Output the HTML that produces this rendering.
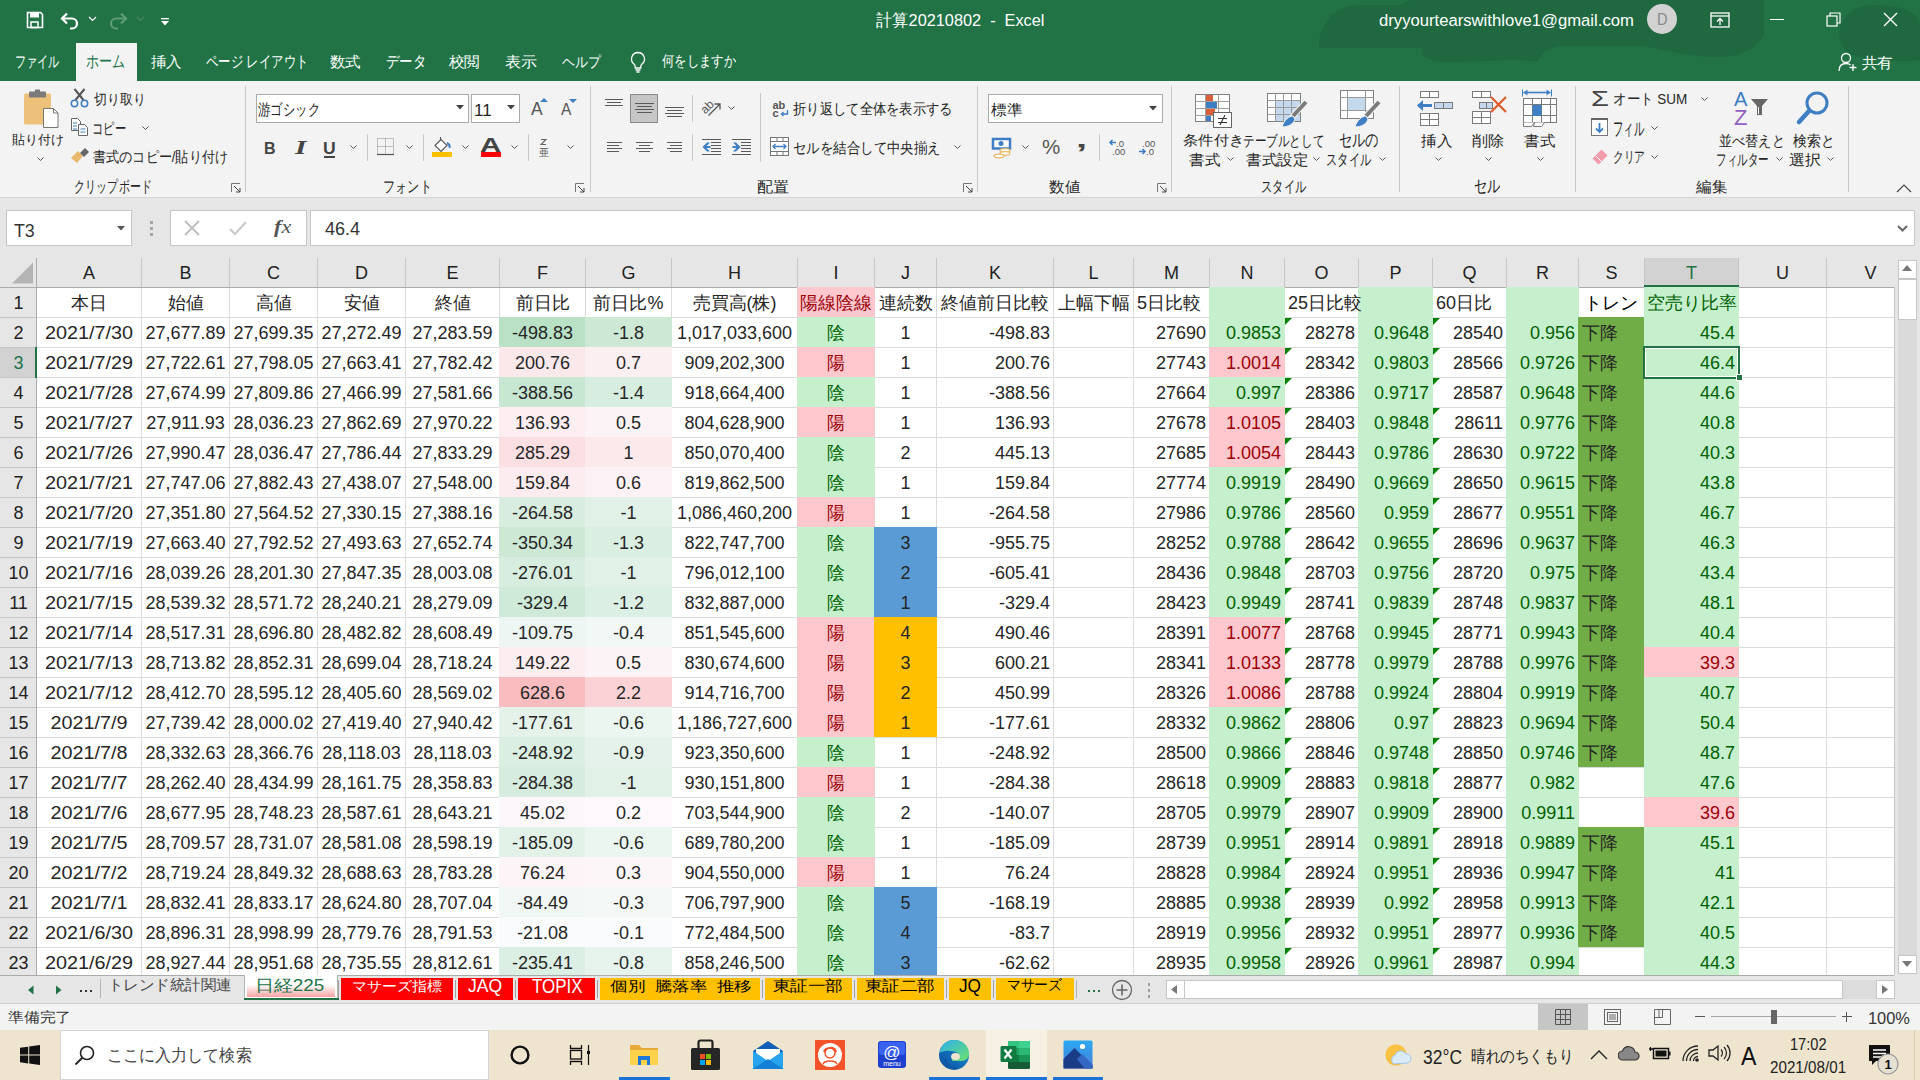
<!DOCTYPE html><html><head><meta charset="utf-8"><style>
html,body{margin:0;padding:0}
body{width:1920px;height:1080px;overflow:hidden;position:relative;font-family:'Liberation Sans', sans-serif;background:#f3f3f3}
.a{position:absolute}
.t{line-height:1;white-space:nowrap;transform-origin:0 0}
</style></head><body>
<div class="a" style="left:0px;top:0px;width:1920px;height:81px;background:#217346;"></div>
<svg class="a" style="left:0;top:0" width="1920" height="81" viewBox="0 0 1920 81">
<g fill="#1f6840">
<path d="M1319,48 C1319,22 1335,5 1362,5 L1400,5 C1405,2 1410,0 1415,0 L1764,0 L1764,35 C1755,50 1740,57 1715,57 C1690,57 1660,48 1640,46 L1560,46 C1545,48 1540,55 1538,62 C1520,58 1480,62 1440,62 C1425,60 1420,55 1422,48 Z"/>
<path d="M1845,50 C1830,30 1845,5 1875,5 C1905,5 1920,15 1920,25 L1920,60 C1900,62 1860,62 1845,50 Z"/>
</g></svg>
<svg class="a" style="left:26px;top:11px;" width="18" height="18" viewBox="0 0 18 18"><path d="M1.5 1.5h13l2 2v13h-15z" fill="none" stroke="#fff" stroke-width="1.6"/><rect x="4" y="1.5" width="9" height="5" fill="#fff"/><rect x="5" y="11" width="7" height="5.5" fill="none" stroke="#fff" stroke-width="1.5"/></svg>
<svg class="a" style="left:60px;top:12px;" width="20" height="18" viewBox="0 0 20 18"><path d="M3 6.5h9a5 5 0 0 1 0 10h-2" fill="none" stroke="#fff" stroke-width="2.2"/><path d="M7 1.5L2 6.5l5 5" fill="none" stroke="#fff" stroke-width="2.2"/></svg>
<svg class="a" style="left:88px;top:16px;" width="9" height="6" viewBox="0 0 9 6"><path d="M1 1l3.5 3.5L8 1" fill="none" stroke="#fff" stroke-width="1.2"/></svg>
<svg class="a" style="left:108px;top:12px;" width="20" height="18" viewBox="0 0 20 18"><path d="M17 6.5H8a5 5 0 0 0 0 10h2" fill="none" stroke="#5e9c78" stroke-width="2.2"/><path d="M13 1.5l5 5-5 5" fill="none" stroke="#5e9c78" stroke-width="2.2"/></svg>
<svg class="a" style="left:136px;top:16px;" width="9" height="6" viewBox="0 0 9 6"><path d="M1 1l3.5 3.5L8 1" fill="none" stroke="#4a8a65" stroke-width="1.2"/></svg>
<svg class="a" style="left:160px;top:18px;" width="10" height="9" viewBox="0 0 10 9"><rect x="1" y="0" width="8" height="1.3" fill="#fff"/><path d="M1 3h8l-4 4.5z" fill="#fff"/></svg>
<div class="a t" style="left:876.00px;top:12.00px;font-size:16px;color:#fff;transform:scale(1.0183,1.0667);">計算20210802&nbsp; - &nbsp;Excel</div>
<div class="a t" style="left:1378.96px;top:11.93px;font-size:16px;color:#fff;transform:scale(1.0412,1.0667);">dryyourtearswithlove1@gmail.com</div>
<div class="a" style="left:1647px;top:4px;width:30px;height:30px;border-radius:50%;background:#d2d2d2"></div>
<div class="a t" style="left:1656.88px;top:11.56px;font-size:13px;color:#8a8a8a;transform:scale(1.1250,1.2222);">D</div>
<svg class="a" style="left:1710px;top:12px;" width="20" height="16" viewBox="0 0 20 16"><rect x="1" y="1" width="18" height="14" fill="none" stroke="#fff" stroke-width="1.3"/><path d="M1 4h18" stroke="#fff" stroke-width="1.3"/><path d="M10 13V6.5M7 9.5l3-3 3 3" fill="none" stroke="#fff" stroke-width="1.3"/></svg>
<div class="a" style="left:1770px;top:19px;width:14px;height:1.3px;background:#fff;"></div>
<svg class="a" style="left:1826px;top:12px;" width="16" height="16" viewBox="0 0 16 16"><rect x="1" y="4" width="10" height="10" fill="none" stroke="#fff" stroke-width="1.2"/><path d="M4 4V1h10v10h-3" fill="none" stroke="#fff" stroke-width="1.2"/></svg>
<svg class="a" style="left:1883px;top:12px;" width="15" height="15" viewBox="0 0 15 15"><path d="M1 1l13 13M14 1L1 14" stroke="#fff" stroke-width="1.4"/></svg>
<div class="a" style="left:76px;top:43px;width:61px;height:38px;background:#f3f3f3;"></div>
<div class="a t" style="left:14.61px;top:54.00px;font-size:16px;color:#fff;transform:scale(0.6935,1.0000);">ファイル</div>
<div class="a t" style="left:86.17px;top:52.85px;font-size:16px;color:#217346;transform:scale(0.8261,1.0769);">ホーム</div>
<div class="a t" style="left:151.00px;top:55.00px;font-size:16px;color:#fff;transform:scale(0.9677,0.9333);">挿入</div>
<div class="a t" style="left:206.23px;top:54.00px;font-size:16px;color:#fff;transform:scale(0.7717,1.0000);">ページ レイアウト</div>
<div class="a t" style="left:330.03px;top:55.00px;font-size:16px;color:#fff;transform:scale(0.9677,0.9333);">数式</div>
<div class="a t" style="left:386.16px;top:54.00px;font-size:16px;color:#fff;transform:scale(0.8409,1.0000);">データ</div>
<div class="a t" style="left:449.00px;top:55.00px;font-size:16px;color:#fff;transform:scale(0.9677,0.9333);">校閲</div>
<div class="a t" style="left:505.00px;top:55.00px;font-size:16px;color:#fff;transform:scale(1.0000,0.9333);">表示</div>
<div class="a t" style="left:562.20px;top:55.00px;font-size:16px;color:#fff;transform:scale(0.8043,0.9333);">ヘルプ</div>
<div class="a t" style="left:662.00px;top:54.07px;font-size:16px;color:#fff;transform:scale(0.7708,0.9333);">何をしますか</div>
<svg class="a" style="left:629px;top:51px;" width="18" height="22" viewBox="0 0 18 22"><path d="M9 1.5a6.5 6.5 0 0 0-4 11.6c.8.7 1.2 1.6 1.2 2.6v1.3h5.6v-1.3c0-1 .4-1.9 1.2-2.6A6.5 6.5 0 0 0 9 1.5z" fill="none" stroke="#fff" stroke-width="1.3"/><path d="M6.5 19h5M7.5 21h3" stroke="#fff" stroke-width="1.3"/></svg>
<svg class="a" style="left:1838px;top:52px;" width="20" height="20" viewBox="0 0 20 20"><circle cx="8" cy="6" r="4.5" fill="none" stroke="#fff" stroke-width="1.3"/><path d="M1 19c0-5 3-7.5 7-7.5 2 0 3.5.5 4.5 1.5" fill="none" stroke="#fff" stroke-width="1.3"/><path d="M15 12v7M11.5 15.5h7" stroke="#fff" stroke-width="1.3"/></svg>
<div class="a t" style="left:1862.00px;top:56.00px;font-size:16px;color:#fff;transform:scale(0.9677,0.9333);">共有</div>
<div class="a" style="left:0px;top:81px;width:1920px;height:116px;background:#f3f3f3;"></div>
<div class="a" style="left:0px;top:197px;width:1920px;height:1px;background:#d6d6d6;"></div>
<svg class="a" style="left:23px;top:89px;" width="38" height="40" viewBox="0 0 38 40"><rect x="1" y="4.5" width="27" height="31" rx="1.5" fill="#eec17a"/><rect x="6" y="2.5" width="17" height="6" rx="1" fill="#7a7a7a"/><rect x="12" y="0.5" width="5" height="4" fill="#7a7a7a"/><path d="M20.5 19.5h10l4.5 4.5v14.5h-14.5z" fill="#fff" stroke="#777" stroke-width="1"/><path d="M30.5 19.5v4.5h4.5" fill="none" stroke="#777" stroke-width="1"/></svg>
<div class="a t" style="left:12.00px;top:133.13px;font-size:15px;color:#262626;transform:scale(0.8644,0.8667);">貼り付け</div>
<svg class="a" style="left:36px;top:156px;" width="9" height="6" viewBox="0 0 9 6"><path d="M1.5 1.5l3 3 3-3" fill="none" stroke="#555" stroke-width="1"/></svg>
<svg class="a" style="left:70px;top:88px;" width="19" height="20" viewBox="0 0 19 20"><path d="M4.5 1l9 11M14.5 1l-9 11" stroke="#555" stroke-width="2"/><circle cx="4.5" cy="15.5" r="3.2" fill="none" stroke="#3e7ec4" stroke-width="1.5"/><circle cx="14.5" cy="15.5" r="3.2" fill="none" stroke="#3e7ec4" stroke-width="1.5"/></svg>
<div class="a t" style="left:94.00px;top:92.07px;font-size:15px;color:#262626;transform:scale(0.8571,0.9286);">切り取り</div>
<svg class="a" style="left:70px;top:117px;" width="20" height="20" viewBox="0 0 20 20"><path d="M1.5 1.5h6l3 3v9h-9z" fill="#fff" stroke="#666" stroke-width="1"/><path d="M8.5 7.5h6l3 3v8h-9z" fill="#fff" stroke="#666" stroke-width="1"/><path d="M3 6h4M3 9h4M3 12h4M10.5 12h5M10.5 15h5" stroke="#3e7ec4" stroke-width="1.2"/></svg>
<div class="a t" style="left:92.48px;top:119.92px;font-size:15px;color:#262626;transform:scale(0.7619,1.0769);">コピー</div>
<svg class="a" style="left:141px;top:125px;" width="9" height="6" viewBox="0 0 9 6"><path d="M1.5 1.5l3 3 3-3" fill="none" stroke="#555" stroke-width="1"/></svg>
<svg class="a" style="left:70px;top:147px;" width="20" height="18" viewBox="0 0 20 18"><path d="M1 11l7-7 5 5-6 7z" fill="#e8b96a"/><path d="M10 6l5-5 4 4-5 5z" fill="#666"/></svg>
<div class="a t" style="left:93.12px;top:149.00px;font-size:15px;color:#262626;transform:scale(0.8750,1.0000);">書式のコピー/貼り付け</div>
<div class="a t" style="left:73.51px;top:177.85px;font-size:15px;color:#262626;transform:scale(0.7426,1.0769);">クリップボード</div>
<svg class="a" style="left:231px;top:183px;" width="11" height="10" viewBox="0 0 11 10"><path d="M0.5 9V0.5H9" fill="none" stroke="#777" stroke-width="1"/><path d="M3 3l6 6M5 9h4V5" fill="none" stroke="#444" stroke-width="1"/></svg>
<div class="a" style="left:245px;top:86px;width:1px;height:106px;background:#c8c8c8;"></div>
<div class="a" style="left:256px;top:94px;width:211px;height:27px;background:#fff;border:1px solid #ababab"></div>
<div class="a t" style="left:258.17px;top:100.93px;font-size:15px;color:#262626;transform:scale(0.8310,1.0714);">游ゴシック</div>
<svg class="a" style="left:456px;top:105px;" width="9" height="5" viewBox="0 0 9 5"><path d="M0 0h8l-4 4.5z" fill="#444"/></svg>
<div class="a" style="left:471px;top:94px;width:47px;height:27px;background:#fff;border:1px solid #ababab"></div>
<div class="a t" style="left:473.93px;top:101.92px;font-size:16px;color:#262626;transform:scale(1.0667,1.0833);">11</div>
<svg class="a" style="left:507px;top:105px;" width="9" height="5" viewBox="0 0 9 5"><path d="M0 0h8l-4 4.5z" fill="#444"/></svg>
<div class="a t" style="left:531.00px;top:99.83px;font-size:16px;color:#555;transform:scale(1.0909,1.1667);">A</div>
<svg class="a" style="left:540px;top:98px;" width="8" height="4" viewBox="0 0 8 4"><path d="M0 4h8L4 0z" fill="#3e7ec4"/></svg>
<div class="a t" style="left:561.00px;top:100.60px;font-size:14px;color:#555;transform:scale(1.1111,1.2000);">A</div>
<svg class="a" style="left:569px;top:99px;" width="8" height="4" viewBox="0 0 8 4"><path d="M0 0h8L4 4z" fill="#3e7ec4"/></svg>
<div class="a t" style="left:264.00px;top:139.92px;font-size:16px;color:#444;transform:scale(1.0000,1.0833);font-weight:bold">B</div>
<div class="a t" style="left:295.00px;top:138.64px;font-size:16px;color:#444;transform:scale(1.8333,1.1818);font-style:italic;font-weight:bold;font-family:Liberation Serif">I</div>
<div class="a t" style="left:322.90px;top:139.92px;font-size:16px;color:#444;transform:scale(1.1000,1.0833);font-weight:bold">U</div>
<div class="a" style="left:324px;top:156px;width:11px;height:1.5px;background:#444;"></div>
<svg class="a" style="left:349px;top:144px;" width="9" height="6" viewBox="0 0 9 6"><path d="M1.5 1.5l3 3 3-3" fill="none" stroke="#555" stroke-width="1"/></svg>
<div class="a" style="left:367px;top:134px;width:1px;height:27px;background:#c8c8c8;"></div>
<svg class="a" style="left:377px;top:138px;" width="18" height="18" viewBox="0 0 18 18"><path d="M0.5 0.5h16v16H0.5zM8.5 0.5v16M0.5 8.5h16" fill="none" stroke="#888" stroke-width="1" stroke-dasharray="1 1"/><path d="M0 16.5h17" stroke="#555" stroke-width="1.2"/></svg>
<svg class="a" style="left:405px;top:144px;" width="9" height="6" viewBox="0 0 9 6"><path d="M1.5 1.5l3 3 3-3" fill="none" stroke="#555" stroke-width="1"/></svg>
<div class="a" style="left:423px;top:134px;width:1px;height:27px;background:#c8c8c8;"></div>
<svg class="a" style="left:431px;top:136px;" width="22" height="22" viewBox="0 0 22 22"><path d="M4 9.5l6-6 6 6-6 6z" fill="#fff" stroke="#555" stroke-width="1.1"/><path d="M9.5 4V1" stroke="#555" stroke-width="1.1"/><path d="M16 7c2 1 3 3 2.5 5" fill="none" stroke="#3e7ec4" stroke-width="2"/><rect x="1" y="16" width="20" height="5" fill="#ffc000"/></svg>
<svg class="a" style="left:461px;top:144px;" width="9" height="6" viewBox="0 0 9 6"><path d="M1.5 1.5l3 3 3-3" fill="none" stroke="#555" stroke-width="1"/></svg>
<div class="a t" style="left:480.27px;top:135.67px;font-size:17px;color:#444;transform:scale(1.7273,1.1667);font-weight:bold">A</div>
<div class="a" style="left:481px;top:152px;width:20px;height:5px;background:#ff0000;"></div>
<svg class="a" style="left:510px;top:144px;" width="9" height="6" viewBox="0 0 9 6"><path d="M1.5 1.5l3 3 3-3" fill="none" stroke="#555" stroke-width="1"/></svg>
<div class="a" style="left:528px;top:134px;width:1px;height:27px;background:#c8c8c8;"></div>
<svg class="a" style="left:538px;top:138px;" width="12" height="19" viewBox="0 0 12 19"><path d="M3 1.5h5l-5 5h5" fill="none" stroke="#666" stroke-width="1.1"/><text x="0.5" y="18" font-size="10" fill="#555">亜</text></svg>
<svg class="a" style="left:566px;top:144px;" width="9" height="6" viewBox="0 0 9 6"><path d="M1.5 1.5l3 3 3-3" fill="none" stroke="#555" stroke-width="1"/></svg>
<div class="a t" style="left:383.37px;top:177.85px;font-size:15px;color:#262626;transform:scale(0.8148,1.0769);">フォント</div>
<svg class="a" style="left:575px;top:183px;" width="11" height="10" viewBox="0 0 11 10"><path d="M0.5 9V0.5H9" fill="none" stroke="#777" stroke-width="1"/><path d="M3 3l6 6M5 9h4V5" fill="none" stroke="#444" stroke-width="1"/></svg>
<div class="a" style="left:590px;top:86px;width:1px;height:106px;background:#c8c8c8;"></div>
<div class="a" style="left:630px;top:94px;width:28px;height:29px;background:#c6c6c6;border:1px solid #8a8a8a;box-sizing:border-box"></div>
<div class="a" style="left:605px;top:99px;width:18px;height:1px;background:#5a5a5a;"></div>
<div class="a" style="left:607px;top:102px;width:14px;height:1px;background:#5a5a5a;"></div>
<div class="a" style="left:605px;top:105px;width:18px;height:1px;background:#5a5a5a;"></div>
<div class="a" style="left:635px;top:103px;width:19px;height:1px;background:#5a5a5a;"></div>
<div class="a" style="left:637px;top:106px;width:15px;height:1px;background:#5a5a5a;"></div>
<div class="a" style="left:635px;top:109px;width:19px;height:1px;background:#5a5a5a;"></div>
<div class="a" style="left:637px;top:112px;width:15px;height:1px;background:#5a5a5a;"></div>
<div class="a" style="left:665px;top:107px;width:19px;height:1px;background:#5a5a5a;"></div>
<div class="a" style="left:667px;top:110px;width:15px;height:1px;background:#5a5a5a;"></div>
<div class="a" style="left:665px;top:113px;width:19px;height:1px;background:#5a5a5a;"></div>
<div class="a" style="left:667px;top:116px;width:15px;height:1px;background:#5a5a5a;"></div>
<div class="a" style="left:607px;top:142px;width:15px;height:1px;background:#5a5a5a;"></div>
<div class="a" style="left:607px;top:145px;width:12px;height:1px;background:#5a5a5a;"></div>
<div class="a" style="left:607px;top:148px;width:15px;height:1px;background:#5a5a5a;"></div>
<div class="a" style="left:607px;top:151px;width:12px;height:1px;background:#5a5a5a;"></div>
<div class="a" style="left:636px;top:142px;width:17px;height:1px;background:#5a5a5a;"></div>
<div class="a" style="left:639px;top:145px;width:11px;height:1px;background:#5a5a5a;"></div>
<div class="a" style="left:636px;top:148px;width:17px;height:1px;background:#5a5a5a;"></div>
<div class="a" style="left:639px;top:151px;width:11px;height:1px;background:#5a5a5a;"></div>
<div class="a" style="left:667px;top:142px;width:15px;height:1px;background:#5a5a5a;"></div>
<div class="a" style="left:670px;top:145px;width:12px;height:1px;background:#5a5a5a;"></div>
<div class="a" style="left:667px;top:148px;width:15px;height:1px;background:#5a5a5a;"></div>
<div class="a" style="left:670px;top:151px;width:12px;height:1px;background:#5a5a5a;"></div>
<div class="a" style="left:692px;top:95px;width:1px;height:27px;background:#c8c8c8;"></div>
<div class="a" style="left:692px;top:134px;width:1px;height:27px;background:#c8c8c8;"></div>
<svg class="a" style="left:700px;top:96px;" width="24" height="24" viewBox="0 0 24 24"><g transform="rotate(-45 8 10)"><text x="0" y="14" font-size="12" fill="#555">ab</text></g><path d="M8.5 19.5L19.5 8.5M14.5 8h5.5v5.5" fill="none" stroke="#555" stroke-width="1.3"/></svg>
<svg class="a" style="left:727px;top:105px;" width="9" height="6" viewBox="0 0 9 6"><path d="M1.5 1.5l3 3 3-3" fill="none" stroke="#555" stroke-width="1"/></svg>
<div class="a" style="left:702px;top:139px;width:19px;height:1px;background:#5a5a5a;"></div>
<div class="a" style="left:702px;top:154px;width:19px;height:1px;background:#5a5a5a;"></div>
<div class="a" style="left:711px;top:142px;width:10px;height:1px;background:#5a5a5a;"></div>
<div class="a" style="left:711px;top:145px;width:10px;height:1px;background:#5a5a5a;"></div>
<div class="a" style="left:711px;top:148px;width:10px;height:1px;background:#5a5a5a;"></div>
<div class="a" style="left:711px;top:151px;width:10px;height:1px;background:#5a5a5a;"></div>
<div class="a" style="left:732px;top:139px;width:19px;height:1px;background:#5a5a5a;"></div>
<div class="a" style="left:732px;top:154px;width:19px;height:1px;background:#5a5a5a;"></div>
<div class="a" style="left:741px;top:142px;width:10px;height:1px;background:#5a5a5a;"></div>
<div class="a" style="left:741px;top:145px;width:10px;height:1px;background:#5a5a5a;"></div>
<div class="a" style="left:741px;top:148px;width:10px;height:1px;background:#5a5a5a;"></div>
<div class="a" style="left:741px;top:151px;width:10px;height:1px;background:#5a5a5a;"></div>
<svg class="a" style="left:702px;top:142px;" width="9" height="10" viewBox="0 0 9 10"><path d="M0.5 5L5 0.5h3L4.5 4h4v2h-4L8 9.5H5z" fill="#3e7ec4"/></svg>
<svg class="a" style="left:732px;top:142px;" width="9" height="10" viewBox="0 0 9 10"><path d="M8.5 5L4 0.5H1L4.5 4h-4v2h4L1 9.5h3z" fill="#3e7ec4"/></svg>
<div class="a" style="left:760px;top:93px;width:1px;height:69px;background:#c8c8c8;"></div>
<svg class="a" style="left:771px;top:99px;" width="20" height="20" viewBox="0 0 20 20"><text x="1.5" y="10" font-size="11" fill="#555" font-weight="bold">ab</text><text x="1.5" y="18" font-size="11" fill="#555" font-weight="bold">c</text><path d="M16.5 11v4h-6M12.5 13l-2 2 2 2" fill="none" stroke="#3e7ec4" stroke-width="1.3"/></svg>
<div class="a t" style="left:793.11px;top:101.00px;font-size:15px;color:#262626;transform:scale(0.8870,1.0000);">折り返して全体を表示する</div>
<svg class="a" style="left:769px;top:136px;" width="21" height="21" viewBox="0 0 21 21"><rect x="1.5" y="1.5" width="18" height="18" fill="#fff" stroke="#777"/><path d="M1.5 5.5h18M1.5 15.5h18M8 1.5v4M14 1.5v4M8 15.5v4M14 15.5v4" stroke="#777"/><path d="M4 10.5h13M6.5 8L4 10.5l2.5 2.5M14.5 8L17 10.5 14.5 13" fill="none" stroke="#3e7ec4" stroke-width="1.3"/></svg>
<div class="a t" style="left:793.10px;top:140.00px;font-size:15px;color:#262626;transform:scale(0.8951,1.0000);">セルを結合して中央揃え</div>
<svg class="a" style="left:953px;top:144px;" width="9" height="6" viewBox="0 0 9 6"><path d="M1.5 1.5l3 3 3-3" fill="none" stroke="#555" stroke-width="1"/></svg>
<div class="a t" style="left:756.93px;top:179.00px;font-size:15px;color:#262626;transform:scale(1.0714,1.0000);">配置</div>
<svg class="a" style="left:963px;top:183px;" width="11" height="10" viewBox="0 0 11 10"><path d="M0.5 9V0.5H9" fill="none" stroke="#777" stroke-width="1"/><path d="M3 3l6 6M5 9h4V5" fill="none" stroke="#444" stroke-width="1"/></svg>
<div class="a" style="left:977px;top:86px;width:1px;height:106px;background:#c8c8c8;"></div>
<div class="a" style="left:988px;top:94px;width:173px;height:27px;background:#fff;border:1px solid #ababab"></div>
<div class="a t" style="left:991.00px;top:102.00px;font-size:15px;color:#262626;transform:scale(1.0345,1.0000);">標準</div>
<svg class="a" style="left:1149px;top:106px;" width="9" height="5" viewBox="0 0 9 5"><path d="M0 0h8l-4 4.5z" fill="#444"/></svg>
<svg class="a" style="left:991px;top:137px;" width="22" height="22" viewBox="0 0 22 22"><rect x="2" y="2" width="17" height="9.5" fill="#fff" stroke="#3e7ec4" stroke-width="2.5"/><circle cx="10" cy="6.5" r="2.5" fill="#3e7ec4"/><ellipse cx="14" cy="13.5" rx="5" ry="1.8" fill="#fff" stroke="#e8b96a" stroke-width="1.3"/><ellipse cx="14" cy="16.5" rx="5" ry="1.8" fill="#fff" stroke="#e8b96a" stroke-width="1.3"/><ellipse cx="8" cy="19" rx="5" ry="1.8" fill="#fff" stroke="#e8b96a" stroke-width="1.3"/></svg>
<svg class="a" style="left:1021px;top:144px;" width="9" height="6" viewBox="0 0 9 6"><path d="M1.5 1.5l3 3 3-3" fill="none" stroke="#555" stroke-width="1"/></svg>
<div class="a t" style="left:1041.86px;top:137.85px;font-size:18px;color:#555;transform:scale(1.1429,1.0769);">%</div>
<div class="a t" style="left:1076.00px;top:139.00px;font-size:20px;color:#444;transform:scale(2.0000,1.3333);font-weight:bold">&#x2019;</div>
<div class="a" style="left:1099px;top:134px;width:1px;height:27px;background:#c8c8c8;"></div>
<svg class="a" style="left:1108px;top:138px;" width="20" height="19" viewBox="0 0 20 19"><text x="8" y="8.5" font-size="9.5" fill="#555">.0</text><text x="4" y="17" font-size="9.5" fill="#555">.00</text><path d="M2 4.5h6M4.5 2L2 4.5 4.5 7" fill="none" stroke="#3e7ec4" stroke-width="1.6"/></svg>
<svg class="a" style="left:1137px;top:138px;" width="22" height="19" viewBox="0 0 22 19"><text x="5" y="8.5" font-size="9.5" fill="#555">.00</text><text x="9" y="17" font-size="9.5" fill="#555">.0</text><path d="M2 13.5h6M5.5 11L8 13.5 5.5 16" fill="none" stroke="#3e7ec4" stroke-width="1.6"/></svg>
<div class="a t" style="left:1049.00px;top:179.00px;font-size:15px;color:#262626;transform:scale(1.0345,1.0000);">数値</div>
<svg class="a" style="left:1157px;top:183px;" width="11" height="10" viewBox="0 0 11 10"><path d="M0.5 9V0.5H9" fill="none" stroke="#777" stroke-width="1"/><path d="M3 3l6 6M5 9h4V5" fill="none" stroke="#444" stroke-width="1"/></svg>
<div class="a" style="left:1171px;top:86px;width:1px;height:106px;background:#c8c8c8;"></div>
<svg class="a" style="left:1190px;top:88px;" width="50" height="45" viewBox="0 0 50 45"><rect x="5.5" y="6.5" width="34" height="27" fill="#fff" stroke="#808080"/><path d="M5.5 13.5h34M5.5 20.5h34M5.5 27.5h34M15.5 6.5v27M28.5 6.5v27" stroke="#a0a0a0"/><rect x="16" y="7" width="7" height="6" fill="#d9603b"/><rect x="16" y="14" width="11" height="6" fill="#3e7ec4"/><rect x="16" y="21" width="9" height="6" fill="#d9603b"/><rect x="16" y="28" width="5" height="5" fill="#3e7ec4"/><rect x="23.5" y="24.5" width="18" height="15" fill="#fff" stroke="#666"/><path d="M28 30.5h9M28 34.5h9M35 27l-5 10" stroke="#333" stroke-width="1.1"/></svg>
<div class="a t" style="left:1182.98px;top:133.07px;font-size:15px;color:#262626;transform:scale(1.0179,0.9333);">条件付き</div>
<div class="a t" style="left:1188.97px;top:152.00px;font-size:15px;color:#262626;transform:scale(1.0345,1.0000);">書式</div>
<svg class="a" style="left:1226px;top:156px;" width="9" height="6" viewBox="0 0 9 6"><path d="M1.5 1.5l3 3 3-3" fill="none" stroke="#555" stroke-width="1"/></svg>
<svg class="a" style="left:1262px;top:88px;" width="48" height="45" viewBox="0 0 48 45"><rect x="5.5" y="5.5" width="33" height="28" fill="#fff" stroke="#808080"/><rect x="14" y="13" width="24" height="20" fill="#c5d9ee"/><path d="M5.5 12.5h33M5.5 19.5h33M5.5 26.5h33M13.5 5.5v28M21.5 5.5v28M29.5 5.5v28" stroke="#9a9a9a"/><path d="M44 14l-14 15" stroke="#f3f3f3" stroke-width="6"/><path d="M44 14l-13 14" stroke="#7a7a7a" stroke-width="4"/><path d="M31 28c-4 0-9 4-11 11 6 0 12-3 13-8z" fill="#3e7ec4" stroke="#f3f3f3" stroke-width="1"/></svg>
<div class="a t" style="left:1243.46px;top:133.00px;font-size:15px;color:#262626;transform:scale(0.7723,1.0000);">テーブルとして</div>
<div class="a t" style="left:1245.97px;top:152.00px;font-size:15px;color:#262626;transform:scale(1.0345,1.0000);">書式設定</div>
<svg class="a" style="left:1312px;top:156px;" width="9" height="6" viewBox="0 0 9 6"><path d="M1.5 1.5l3 3 3-3" fill="none" stroke="#555" stroke-width="1"/></svg>
<svg class="a" style="left:1336px;top:86px;" width="48" height="47" viewBox="0 0 48 47"><rect x="4.5" y="4.5" width="33" height="28" fill="#fff" stroke="#808080"/><rect x="12" y="12" width="18" height="12" fill="#c5d9ee"/><path d="M4.5 11.5h33M4.5 24.5h33M11.5 4.5v28M29.5 4.5v28" stroke="#9a9a9a"/><path d="M43 16l-14 15" stroke="#f3f3f3" stroke-width="6"/><path d="M43 16l-13 14" stroke="#7a7a7a" stroke-width="4"/><path d="M30 30c-4 0-9 4-11 11 6 0 12-3 13-8z" fill="#3e7ec4" stroke="#f3f3f3" stroke-width="1"/></svg>
<div class="a t" style="left:1339.14px;top:130.50px;font-size:15px;color:#262626;transform:scale(0.8605,1.1667);">セルの</div>
<div class="a t" style="left:1326.48px;top:150.85px;font-size:15px;color:#262626;transform:scale(0.7586,1.0769);">スタイル</div>
<svg class="a" style="left:1378px;top:156px;" width="9" height="6" viewBox="0 0 9 6"><path d="M1.5 1.5l3 3 3-3" fill="none" stroke="#555" stroke-width="1"/></svg>
<div class="a t" style="left:1261.48px;top:177.85px;font-size:15px;color:#262626;transform:scale(0.7586,1.0769);">スタイル</div>
<div class="a" style="left:1399px;top:86px;width:1px;height:106px;background:#c8c8c8;"></div>
<svg class="a" style="left:1410px;top:85px;" width="50" height="45" viewBox="0 0 50 45"><rect x="10.5" y="6.5" width="18" height="6" fill="#fff" stroke="#7a7a7a"/><path d="M19.5 6.5v6" stroke="#7a7a7a"/><rect x="24.5" y="17.5" width="18" height="6" fill="#c5d9ee" stroke="#7a7a7a"/><path d="M33.5 17.5v6" stroke="#7a7a7a"/><rect x="10.5" y="28.5" width="18" height="12" fill="#fff" stroke="#7a7a7a"/><path d="M19.5 28.5v12M10.5 34.5h18" stroke="#7a7a7a"/><path d="M8 20.5h14" stroke="#3e7ec4" stroke-width="3"/><path d="M7 20.5l6-5.5v11z" fill="#3e7ec4"/></svg>
<div class="a t" style="left:1421.00px;top:133.00px;font-size:15px;color:#262626;transform:scale(1.0345,1.0000);">挿入</div>
<svg class="a" style="left:1434px;top:156px;" width="9" height="6" viewBox="0 0 9 6"><path d="M1.5 1.5l3 3 3-3" fill="none" stroke="#555" stroke-width="1"/></svg>
<svg class="a" style="left:1465px;top:85px;" width="45" height="45" viewBox="0 0 45 45"><rect x="7.5" y="6.5" width="18" height="6" fill="#fff" stroke="#7a7a7a"/><path d="M16.5 6.5v6" stroke="#7a7a7a"/><rect x="14.5" y="17.5" width="13" height="6" fill="#c5d9ee" stroke="#7a7a7a"/><path d="M21.5 17.5v6" stroke="#7a7a7a"/><rect x="7.5" y="26.5" width="18" height="12" fill="#fff" stroke="#7a7a7a"/><path d="M16.5 26.5v12M7.5 32.5h18" stroke="#7a7a7a"/><path d="M26 12l15 15M41 12L26 27" stroke="#e05a2b" stroke-width="2.2"/></svg>
<div class="a t" style="left:1471.93px;top:133.00px;font-size:15px;color:#262626;transform:scale(1.0714,1.0000);">削除</div>
<svg class="a" style="left:1484px;top:156px;" width="9" height="6" viewBox="0 0 9 6"><path d="M1.5 1.5l3 3 3-3" fill="none" stroke="#555" stroke-width="1"/></svg>
<svg class="a" style="left:1520px;top:86px;" width="40" height="42" viewBox="0 0 40 42"><path d="M3.5 6.5h27" stroke="#3e7ec4" stroke-width="1.6"/><path d="M3.5 6.5l4-3v6zM30.5 6.5l-4-3v6z" fill="#3e7ec4"/><path d="M2.5 3.5v7M31.5 3.5v7" stroke="#3e7ec4" stroke-width="1"/><rect x="3.5" y="12.5" width="33" height="24" fill="#fff" stroke="#7a7a7a"/><path d="M12.5 12.5v24M21.5 12.5v24M30.5 12.5v24M3.5 18.5h33M3.5 29.5h33" stroke="#7a7a7a"/><rect x="12.5" y="19" width="9" height="11" fill="#3e7ec4"/><path d="M3.5 36.5v4h8l3-4M14.5 36.5l-1 4h8l3-4" fill="#fff" stroke="#7a7a7a"/></svg>
<div class="a t" style="left:1523.97px;top:133.00px;font-size:15px;color:#262626;transform:scale(1.0345,1.0000);">書式</div>
<svg class="a" style="left:1536px;top:156px;" width="9" height="6" viewBox="0 0 9 6"><path d="M1.5 1.5l3 3 3-3" fill="none" stroke="#555" stroke-width="1"/></svg>
<div class="a t" style="left:1474.14px;top:176.50px;font-size:15px;color:#262626;transform:scale(0.8621,1.1667);">セル</div>
<div class="a" style="left:1575px;top:86px;width:1px;height:106px;background:#c8c8c8;"></div>
<div class="a t" style="left:1590.55px;top:86.57px;font-size:20px;color:#444;transform:scale(1.4545,1.1429);">&#931;</div>
<div class="a t" style="left:1613.10px;top:91.00px;font-size:15px;color:#262626;transform:scale(0.9000,1.0000);">オート SUM</div>
<svg class="a" style="left:1700px;top:96px;" width="9" height="6" viewBox="0 0 9 6"><path d="M1.5 1.5l3 3 3-3" fill="none" stroke="#555" stroke-width="1"/></svg>
<svg class="a" style="left:1590px;top:117px;" width="19" height="20" viewBox="0 0 19 20"><rect x="1.5" y="1.5" width="16" height="17" fill="#fff" stroke="#777"/><path d="M1 2h17" stroke="#666" stroke-width="2"/><path d="M9.5 6v9M6 11.5l3.5 3.5 3.5-3.5" fill="none" stroke="#3e7ec4" stroke-width="1.8"/></svg>
<div class="a t" style="left:1612.60px;top:118.18px;font-size:15px;color:#262626;transform:scale(0.6977,1.2727);">フィル</div>
<svg class="a" style="left:1650px;top:125px;" width="9" height="6" viewBox="0 0 9 6"><path d="M1.5 1.5l3 3 3-3" fill="none" stroke="#555" stroke-width="1"/></svg>
<svg class="a" style="left:1591px;top:147px;" width="18" height="18" viewBox="0 0 18 18"><path d="M1.5 11.5l9-9 6 6-9 9z" fill="#f29cab"/><path d="M4.5 8.5l6 6" stroke="#fff" stroke-width="1"/></svg>
<div class="a t" style="left:1612.57px;top:149.00px;font-size:15px;color:#262626;transform:scale(0.7143,1.0000);">クリア</div>
<svg class="a" style="left:1650px;top:154px;" width="9" height="6" viewBox="0 0 9 6"><path d="M1.5 1.5l3 3 3-3" fill="none" stroke="#555" stroke-width="1"/></svg>
<div class="a t" style="left:1734.00px;top:89.67px;font-size:17px;color:#3e7ec4;transform:scale(1.1818,1.1667);">A</div>
<div class="a t" style="left:1734.00px;top:106.50px;font-size:17px;color:#8e5fc0;transform:scale(1.3000,1.2500);">Z</div>
<svg class="a" style="left:1750px;top:98px;" width="19" height="18" viewBox="0 0 19 18"><path d="M1 1h17l-6 7v9h-5v-9z" fill="#666"/><path d="M8.5 9v7" stroke="#fff" stroke-width="1"/></svg>
<div class="a t" style="left:1719.00px;top:133.00px;font-size:15px;color:#262626;transform:scale(0.8750,1.0000);">並べ替えと</div>
<div class="a t" style="left:1715.58px;top:150.85px;font-size:15px;color:#262626;transform:scale(0.7083,1.0769);">フィルター</div>
<svg class="a" style="left:1775px;top:156px;" width="9" height="6" viewBox="0 0 9 6"><path d="M1.5 1.5l3 3 3-3" fill="none" stroke="#555" stroke-width="1"/></svg>
<svg class="a" style="left:1795px;top:90px;" width="37" height="37" viewBox="0 0 37 37"><circle cx="22" cy="13" r="10" fill="none" stroke="#3e7ec4" stroke-width="3"/><path d="M14 21L4 32" stroke="#3e7ec4" stroke-width="4.5" stroke-linecap="round"/></svg>
<div class="a t" style="left:1793.00px;top:133.00px;font-size:15px;color:#262626;transform:scale(0.9286,1.0000);">検索と</div>
<div class="a t" style="left:1788.93px;top:152.00px;font-size:15px;color:#262626;transform:scale(1.0714,1.0000);">選択</div>
<svg class="a" style="left:1826px;top:156px;" width="9" height="6" viewBox="0 0 9 6"><path d="M1.5 1.5l3 3 3-3" fill="none" stroke="#555" stroke-width="1"/></svg>
<div class="a t" style="left:1696.00px;top:179.00px;font-size:15px;color:#262626;transform:scale(1.0345,1.0000);">編集</div>
<div class="a" style="left:1848px;top:86px;width:1px;height:106px;background:#c8c8c8;"></div>
<svg class="a" style="left:1896px;top:184px;" width="16" height="10" viewBox="0 0 16 10"><path d="M1 8l7-7 7 7" fill="none" stroke="#444" stroke-width="1.2"/></svg>
<div class="a" style="left:0px;top:198px;width:1920px;height:60px;background:#e6e6e6;"></div>
<div class="a" style="left:6px;top:210px;width:124px;height:34px;background:#fff;border:1px solid #c6c6c6"></div>
<div class="a t" style="left:14.00px;top:221.83px;font-size:16px;color:#333;transform:scale(1.1111,1.1667);">T3</div>
<svg class="a" style="left:117px;top:226px;" width="9" height="5" viewBox="0 0 9 5"><path d="M0 0h8l-4 4.5z" fill="#555"/></svg>
<div class="a" style="left:150px;top:221px;width:3px;height:3px;background:#a6a6a6;"></div>
<div class="a" style="left:150px;top:227px;width:3px;height:3px;background:#a6a6a6;"></div>
<div class="a" style="left:150px;top:233px;width:3px;height:3px;background:#a6a6a6;"></div>
<div class="a" style="left:170px;top:210px;width:135px;height:34px;background:#fff;border:1px solid #c6c6c6"></div>
<svg class="a" style="left:184px;top:220px;" width="16" height="16" viewBox="0 0 16 16"><path d="M1 1l14 14M15 1L1 15" stroke="#bdbdbd" stroke-width="1.8"/></svg>
<svg class="a" style="left:229px;top:221px;" width="18" height="15" viewBox="0 0 18 15"><path d="M1 8l5 5L17 1" fill="none" stroke="#c9c9c9" stroke-width="2.2"/></svg>
<div class="a t" style="left:274.00px;top:216.75px;font-size:17px;color:#555;transform:scale(1.3077,1.1250);font-family:Liberation Serif"><i><b>f</b>x</i></div>
<div class="a" style="left:310px;top:210px;width:1603px;height:34px;background:#fff;border:1px solid #c6c6c6"></div>
<div class="a t" style="left:325.00px;top:219.83px;font-size:16px;color:#333;transform:scale(1.1290,1.1667);">46.4</div>
<svg class="a" style="left:1897px;top:225px;" width="11" height="7" viewBox="0 0 11 7"><path d="M1 1l4.5 4.5L10 1" fill="none" stroke="#666" stroke-width="2"/></svg>
<div class="a" style="left:0px;top:258px;width:1920px;height:30px;background:#e6e6e6;"></div>
<div class="a" style="left:0px;top:287px;width:36px;height:688px;background:#e6e6e6;"></div>
<div class="a" style="left:37px;top:288px;width:1857px;height:687px;background:#fff;"></div>
<div class="a" style="left:1644px;top:258px;width:95px;height:29px;background:#d2d2d2;"></div>
<svg class="a" style="left:12px;top:262px;" width="22" height="22" viewBox="0 0 22 22"><path d="M21 0.5V21.5H0z" fill="#b4b4b4"/></svg>
<div class="a" style="left:141px;top:258px;width:1px;height:29px;background:#c6c6c6;"></div>
<div class="a" style="left:229px;top:258px;width:1px;height:29px;background:#c6c6c6;"></div>
<div class="a" style="left:317px;top:258px;width:1px;height:29px;background:#c6c6c6;"></div>
<div class="a" style="left:405px;top:258px;width:1px;height:29px;background:#c6c6c6;"></div>
<div class="a" style="left:499px;top:258px;width:1px;height:29px;background:#c6c6c6;"></div>
<div class="a" style="left:585px;top:258px;width:1px;height:29px;background:#c6c6c6;"></div>
<div class="a" style="left:671px;top:258px;width:1px;height:29px;background:#c6c6c6;"></div>
<div class="a" style="left:797px;top:258px;width:1px;height:29px;background:#c6c6c6;"></div>
<div class="a" style="left:874px;top:258px;width:1px;height:29px;background:#c6c6c6;"></div>
<div class="a" style="left:936px;top:258px;width:1px;height:29px;background:#c6c6c6;"></div>
<div class="a" style="left:1053px;top:258px;width:1px;height:29px;background:#c6c6c6;"></div>
<div class="a" style="left:1133px;top:258px;width:1px;height:29px;background:#c6c6c6;"></div>
<div class="a" style="left:1209px;top:258px;width:1px;height:29px;background:#c6c6c6;"></div>
<div class="a" style="left:1284px;top:258px;width:1px;height:29px;background:#c6c6c6;"></div>
<div class="a" style="left:1358px;top:258px;width:1px;height:29px;background:#c6c6c6;"></div>
<div class="a" style="left:1432px;top:258px;width:1px;height:29px;background:#c6c6c6;"></div>
<div class="a" style="left:1506px;top:258px;width:1px;height:29px;background:#c6c6c6;"></div>
<div class="a" style="left:1578px;top:258px;width:1px;height:29px;background:#c6c6c6;"></div>
<div class="a" style="left:1644px;top:258px;width:1px;height:29px;background:#c6c6c6;"></div>
<div class="a" style="left:1738px;top:258px;width:1px;height:29px;background:#c6c6c6;"></div>
<div class="a" style="left:1826px;top:258px;width:1px;height:29px;background:#c6c6c6;"></div>
<div class="a t" style="left:-311.0px;width:800px;text-align:center;top:264.26px;font-size:18px;color:#222;">A</div>
<div class="a t" style="left:-214.5px;width:800px;text-align:center;top:264.26px;font-size:18px;color:#222;">B</div>
<div class="a t" style="left:-126.5px;width:800px;text-align:center;top:264.26px;font-size:18px;color:#222;">C</div>
<div class="a t" style="left:-38.5px;width:800px;text-align:center;top:264.26px;font-size:18px;color:#222;">D</div>
<div class="a t" style="left:52.5px;width:800px;text-align:center;top:264.26px;font-size:18px;color:#222;">E</div>
<div class="a t" style="left:142.5px;width:800px;text-align:center;top:264.26px;font-size:18px;color:#222;">F</div>
<div class="a t" style="left:228.5px;width:800px;text-align:center;top:264.26px;font-size:18px;color:#222;">G</div>
<div class="a t" style="left:334.5px;width:800px;text-align:center;top:264.26px;font-size:18px;color:#222;">H</div>
<div class="a t" style="left:436.0px;width:800px;text-align:center;top:264.26px;font-size:18px;color:#222;">I</div>
<div class="a t" style="left:505.5px;width:800px;text-align:center;top:264.26px;font-size:18px;color:#222;">J</div>
<div class="a t" style="left:595.0px;width:800px;text-align:center;top:264.26px;font-size:18px;color:#222;">K</div>
<div class="a t" style="left:693.5px;width:800px;text-align:center;top:264.26px;font-size:18px;color:#222;">L</div>
<div class="a t" style="left:771.5px;width:800px;text-align:center;top:264.26px;font-size:18px;color:#222;">M</div>
<div class="a t" style="left:847.0px;width:800px;text-align:center;top:264.26px;font-size:18px;color:#222;">N</div>
<div class="a t" style="left:921.5px;width:800px;text-align:center;top:264.26px;font-size:18px;color:#222;">O</div>
<div class="a t" style="left:995.5px;width:800px;text-align:center;top:264.26px;font-size:18px;color:#222;">P</div>
<div class="a t" style="left:1069.5px;width:800px;text-align:center;top:264.26px;font-size:18px;color:#222;">Q</div>
<div class="a t" style="left:1142.5px;width:800px;text-align:center;top:264.26px;font-size:18px;color:#222;">R</div>
<div class="a t" style="left:1211.5px;width:800px;text-align:center;top:264.26px;font-size:18px;color:#222;">S</div>
<div class="a t" style="left:1291.5px;width:800px;text-align:center;top:264.26px;font-size:18px;color:#217346;">T</div>
<div class="a t" style="left:1382.5px;width:800px;text-align:center;top:264.26px;font-size:18px;color:#222;">U</div>
<div class="a t" style="left:1470.5px;width:800px;text-align:center;top:264.26px;font-size:18px;color:#222;">V</div>
<div class="a" style="left:0px;top:287px;width:1894px;height:1px;background:#ababab;"></div>
<div class="a" style="left:1644px;top:285px;width:95px;height:2px;background:#217346;"></div>
<div class="a" style="left:36px;top:258px;width:1px;height:717px;background:#ababab;"></div>
<div class="a" style="left:0px;top:348px;width:36px;height:29px;background:#d2d2d2;"></div>
<div class="a" style="left:0px;top:317px;width:36px;height:1px;background:#c6c6c6;"></div>
<div class="a t" style="left:-381.5px;width:800px;text-align:center;top:293.76px;font-size:18px;color:#222;">1</div>
<div class="a" style="left:0px;top:347px;width:36px;height:1px;background:#c6c6c6;"></div>
<div class="a t" style="left:-381.5px;width:800px;text-align:center;top:323.76px;font-size:18px;color:#222;">2</div>
<div class="a" style="left:0px;top:377px;width:36px;height:1px;background:#c6c6c6;"></div>
<div class="a t" style="left:-381.5px;width:800px;text-align:center;top:353.76px;font-size:18px;color:#217346;">3</div>
<div class="a" style="left:0px;top:407px;width:36px;height:1px;background:#c6c6c6;"></div>
<div class="a t" style="left:-381.5px;width:800px;text-align:center;top:383.76px;font-size:18px;color:#222;">4</div>
<div class="a" style="left:0px;top:437px;width:36px;height:1px;background:#c6c6c6;"></div>
<div class="a t" style="left:-381.5px;width:800px;text-align:center;top:413.76px;font-size:18px;color:#222;">5</div>
<div class="a" style="left:0px;top:467px;width:36px;height:1px;background:#c6c6c6;"></div>
<div class="a t" style="left:-381.5px;width:800px;text-align:center;top:443.76px;font-size:18px;color:#222;">6</div>
<div class="a" style="left:0px;top:497px;width:36px;height:1px;background:#c6c6c6;"></div>
<div class="a t" style="left:-381.5px;width:800px;text-align:center;top:473.76px;font-size:18px;color:#222;">7</div>
<div class="a" style="left:0px;top:527px;width:36px;height:1px;background:#c6c6c6;"></div>
<div class="a t" style="left:-381.5px;width:800px;text-align:center;top:503.76px;font-size:18px;color:#222;">8</div>
<div class="a" style="left:0px;top:557px;width:36px;height:1px;background:#c6c6c6;"></div>
<div class="a t" style="left:-381.5px;width:800px;text-align:center;top:533.76px;font-size:18px;color:#222;">9</div>
<div class="a" style="left:0px;top:587px;width:36px;height:1px;background:#c6c6c6;"></div>
<div class="a t" style="left:-381.5px;width:800px;text-align:center;top:563.76px;font-size:18px;color:#222;">10</div>
<div class="a" style="left:0px;top:617px;width:36px;height:1px;background:#c6c6c6;"></div>
<div class="a t" style="left:-381.5px;width:800px;text-align:center;top:593.76px;font-size:18px;color:#222;">11</div>
<div class="a" style="left:0px;top:647px;width:36px;height:1px;background:#c6c6c6;"></div>
<div class="a t" style="left:-381.5px;width:800px;text-align:center;top:623.76px;font-size:18px;color:#222;">12</div>
<div class="a" style="left:0px;top:677px;width:36px;height:1px;background:#c6c6c6;"></div>
<div class="a t" style="left:-381.5px;width:800px;text-align:center;top:653.76px;font-size:18px;color:#222;">13</div>
<div class="a" style="left:0px;top:707px;width:36px;height:1px;background:#c6c6c6;"></div>
<div class="a t" style="left:-381.5px;width:800px;text-align:center;top:683.76px;font-size:18px;color:#222;">14</div>
<div class="a" style="left:0px;top:737px;width:36px;height:1px;background:#c6c6c6;"></div>
<div class="a t" style="left:-381.5px;width:800px;text-align:center;top:713.76px;font-size:18px;color:#222;">15</div>
<div class="a" style="left:0px;top:767px;width:36px;height:1px;background:#c6c6c6;"></div>
<div class="a t" style="left:-381.5px;width:800px;text-align:center;top:743.76px;font-size:18px;color:#222;">16</div>
<div class="a" style="left:0px;top:797px;width:36px;height:1px;background:#c6c6c6;"></div>
<div class="a t" style="left:-381.5px;width:800px;text-align:center;top:773.76px;font-size:18px;color:#222;">17</div>
<div class="a" style="left:0px;top:827px;width:36px;height:1px;background:#c6c6c6;"></div>
<div class="a t" style="left:-381.5px;width:800px;text-align:center;top:803.76px;font-size:18px;color:#222;">18</div>
<div class="a" style="left:0px;top:857px;width:36px;height:1px;background:#c6c6c6;"></div>
<div class="a t" style="left:-381.5px;width:800px;text-align:center;top:833.76px;font-size:18px;color:#222;">19</div>
<div class="a" style="left:0px;top:887px;width:36px;height:1px;background:#c6c6c6;"></div>
<div class="a t" style="left:-381.5px;width:800px;text-align:center;top:863.76px;font-size:18px;color:#222;">20</div>
<div class="a" style="left:0px;top:917px;width:36px;height:1px;background:#c6c6c6;"></div>
<div class="a t" style="left:-381.5px;width:800px;text-align:center;top:893.76px;font-size:18px;color:#222;">21</div>
<div class="a" style="left:0px;top:947px;width:36px;height:1px;background:#c6c6c6;"></div>
<div class="a t" style="left:-381.5px;width:800px;text-align:center;top:923.76px;font-size:18px;color:#222;">22</div>
<div class="a t" style="left:-381.5px;width:800px;text-align:center;top:953.76px;font-size:18px;color:#222;">23</div>
<div class="a" style="left:35px;top:347px;width:2px;height:31px;background:#217346;"></div>
<div class="a" style="left:141px;top:288px;width:1px;height:687px;background:#dadada;"></div>
<div class="a" style="left:229px;top:288px;width:1px;height:687px;background:#dadada;"></div>
<div class="a" style="left:317px;top:288px;width:1px;height:687px;background:#dadada;"></div>
<div class="a" style="left:405px;top:288px;width:1px;height:687px;background:#dadada;"></div>
<div class="a" style="left:499px;top:288px;width:1px;height:687px;background:#dadada;"></div>
<div class="a" style="left:585px;top:288px;width:1px;height:687px;background:#dadada;"></div>
<div class="a" style="left:671px;top:288px;width:1px;height:687px;background:#dadada;"></div>
<div class="a" style="left:797px;top:288px;width:1px;height:687px;background:#dadada;"></div>
<div class="a" style="left:874px;top:288px;width:1px;height:687px;background:#dadada;"></div>
<div class="a" style="left:936px;top:288px;width:1px;height:687px;background:#dadada;"></div>
<div class="a" style="left:1053px;top:288px;width:1px;height:687px;background:#dadada;"></div>
<div class="a" style="left:1133px;top:288px;width:1px;height:687px;background:#dadada;"></div>
<div class="a" style="left:1209px;top:288px;width:1px;height:687px;background:#dadada;"></div>
<div class="a" style="left:1284px;top:288px;width:1px;height:687px;background:#dadada;"></div>
<div class="a" style="left:1358px;top:288px;width:1px;height:687px;background:#dadada;"></div>
<div class="a" style="left:1432px;top:288px;width:1px;height:687px;background:#dadada;"></div>
<div class="a" style="left:1506px;top:288px;width:1px;height:687px;background:#dadada;"></div>
<div class="a" style="left:1578px;top:288px;width:1px;height:687px;background:#dadada;"></div>
<div class="a" style="left:1644px;top:288px;width:1px;height:687px;background:#dadada;"></div>
<div class="a" style="left:1738px;top:288px;width:1px;height:687px;background:#dadada;"></div>
<div class="a" style="left:1826px;top:288px;width:1px;height:687px;background:#dadada;"></div>
<div class="a" style="left:37px;top:317px;width:1857px;height:1px;background:#dadada;"></div>
<div class="a" style="left:37px;top:347px;width:1857px;height:1px;background:#dadada;"></div>
<div class="a" style="left:37px;top:377px;width:1857px;height:1px;background:#dadada;"></div>
<div class="a" style="left:37px;top:407px;width:1857px;height:1px;background:#dadada;"></div>
<div class="a" style="left:37px;top:437px;width:1857px;height:1px;background:#dadada;"></div>
<div class="a" style="left:37px;top:467px;width:1857px;height:1px;background:#dadada;"></div>
<div class="a" style="left:37px;top:497px;width:1857px;height:1px;background:#dadada;"></div>
<div class="a" style="left:37px;top:527px;width:1857px;height:1px;background:#dadada;"></div>
<div class="a" style="left:37px;top:557px;width:1857px;height:1px;background:#dadada;"></div>
<div class="a" style="left:37px;top:587px;width:1857px;height:1px;background:#dadada;"></div>
<div class="a" style="left:37px;top:617px;width:1857px;height:1px;background:#dadada;"></div>
<div class="a" style="left:37px;top:647px;width:1857px;height:1px;background:#dadada;"></div>
<div class="a" style="left:37px;top:677px;width:1857px;height:1px;background:#dadada;"></div>
<div class="a" style="left:37px;top:707px;width:1857px;height:1px;background:#dadada;"></div>
<div class="a" style="left:37px;top:737px;width:1857px;height:1px;background:#dadada;"></div>
<div class="a" style="left:37px;top:767px;width:1857px;height:1px;background:#dadada;"></div>
<div class="a" style="left:37px;top:797px;width:1857px;height:1px;background:#dadada;"></div>
<div class="a" style="left:37px;top:827px;width:1857px;height:1px;background:#dadada;"></div>
<div class="a" style="left:37px;top:857px;width:1857px;height:1px;background:#dadada;"></div>
<div class="a" style="left:37px;top:887px;width:1857px;height:1px;background:#dadada;"></div>
<div class="a" style="left:37px;top:917px;width:1857px;height:1px;background:#dadada;"></div>
<div class="a" style="left:37px;top:947px;width:1857px;height:1px;background:#dadada;"></div>
<div class="a" style="left:1894px;top:287px;width:1px;height:688px;background:#c6c6c6;"></div>
<div class="a" style="left:797px;top:287px;width:78px;height:30px;background:#ffc7ce"></div>
<div class="a" style="left:1209px;top:287px;width:76px;height:30px;background:#c6efce"></div>
<div class="a" style="left:1358px;top:287px;width:75px;height:30px;background:#c6efce"></div>
<div class="a" style="left:1506px;top:287px;width:73px;height:30px;background:#c6efce"></div>
<div class="a" style="left:1644px;top:287px;width:95px;height:30px;background:#c6efce"></div>
<div class="a" style="left:499px;top:317px;width:87px;height:30px;background:#b8e1c5"></div>
<div class="a" style="left:585px;top:317px;width:87px;height:30px;background:#cde9d6"></div>
<div class="a" style="left:797px;top:317px;width:78px;height:30px;background:#c6efce"></div>
<div class="a" style="left:1209px;top:317px;width:76px;height:30px;background:#c6efce"></div>
<div class="a" style="left:1358px;top:317px;width:75px;height:30px;background:#c6efce"></div>
<div class="a" style="left:1506px;top:317px;width:73px;height:30px;background:#c6efce"></div>
<div class="a" style="left:1578px;top:317px;width:67px;height:30px;background:#70ad47"></div>
<div class="a" style="left:1644px;top:317px;width:95px;height:30px;background:#c6efce"></div>
<div class="a" style="left:499px;top:347px;width:87px;height:30px;background:#fbe8ea"></div>
<div class="a" style="left:585px;top:347px;width:87px;height:30px;background:#fceff2"></div>
<div class="a" style="left:797px;top:347px;width:78px;height:30px;background:#ffc7ce"></div>
<div class="a" style="left:1209px;top:347px;width:76px;height:30px;background:#ffc7ce"></div>
<div class="a" style="left:1358px;top:347px;width:75px;height:30px;background:#c6efce"></div>
<div class="a" style="left:1506px;top:347px;width:73px;height:30px;background:#c6efce"></div>
<div class="a" style="left:1578px;top:347px;width:67px;height:30px;background:#70ad47"></div>
<div class="a" style="left:1644px;top:347px;width:95px;height:30px;background:#c6efce"></div>
<div class="a" style="left:499px;top:377px;width:87px;height:30px;background:#c7e7d2"></div>
<div class="a" style="left:585px;top:377px;width:87px;height:30px;background:#d7eddf"></div>
<div class="a" style="left:797px;top:377px;width:78px;height:30px;background:#c6efce"></div>
<div class="a" style="left:1209px;top:377px;width:76px;height:30px;background:#c6efce"></div>
<div class="a" style="left:1358px;top:377px;width:75px;height:30px;background:#c6efce"></div>
<div class="a" style="left:1506px;top:377px;width:73px;height:30px;background:#c6efce"></div>
<div class="a" style="left:1578px;top:377px;width:67px;height:30px;background:#70ad47"></div>
<div class="a" style="left:1644px;top:377px;width:95px;height:30px;background:#c6efce"></div>
<div class="a" style="left:499px;top:407px;width:87px;height:30px;background:#fceef1"></div>
<div class="a" style="left:585px;top:407px;width:87px;height:30px;background:#fcf3f6"></div>
<div class="a" style="left:797px;top:407px;width:78px;height:30px;background:#ffc7ce"></div>
<div class="a" style="left:1209px;top:407px;width:76px;height:30px;background:#ffc7ce"></div>
<div class="a" style="left:1358px;top:407px;width:75px;height:30px;background:#c6efce"></div>
<div class="a" style="left:1506px;top:407px;width:73px;height:30px;background:#c6efce"></div>
<div class="a" style="left:1578px;top:407px;width:67px;height:30px;background:#70ad47"></div>
<div class="a" style="left:1644px;top:407px;width:95px;height:30px;background:#c6efce"></div>
<div class="a" style="left:499px;top:437px;width:87px;height:30px;background:#fbdfe2"></div>
<div class="a" style="left:585px;top:437px;width:87px;height:30px;background:#fbe9ec"></div>
<div class="a" style="left:797px;top:437px;width:78px;height:30px;background:#c6efce"></div>
<div class="a" style="left:1209px;top:437px;width:76px;height:30px;background:#ffc7ce"></div>
<div class="a" style="left:1358px;top:437px;width:75px;height:30px;background:#c6efce"></div>
<div class="a" style="left:1506px;top:437px;width:73px;height:30px;background:#c6efce"></div>
<div class="a" style="left:1578px;top:437px;width:67px;height:30px;background:#70ad47"></div>
<div class="a" style="left:1644px;top:437px;width:95px;height:30px;background:#c6efce"></div>
<div class="a" style="left:499px;top:467px;width:87px;height:30px;background:#fcecef"></div>
<div class="a" style="left:585px;top:467px;width:87px;height:30px;background:#fcf1f4"></div>
<div class="a" style="left:797px;top:467px;width:78px;height:30px;background:#c6efce"></div>
<div class="a" style="left:1209px;top:467px;width:76px;height:30px;background:#c6efce"></div>
<div class="a" style="left:1358px;top:467px;width:75px;height:30px;background:#c6efce"></div>
<div class="a" style="left:1506px;top:467px;width:73px;height:30px;background:#c6efce"></div>
<div class="a" style="left:1578px;top:467px;width:67px;height:30px;background:#70ad47"></div>
<div class="a" style="left:1644px;top:467px;width:95px;height:30px;background:#c6efce"></div>
<div class="a" style="left:499px;top:497px;width:87px;height:30px;background:#d8ede0"></div>
<div class="a" style="left:585px;top:497px;width:87px;height:30px;background:#e2f1e8"></div>
<div class="a" style="left:797px;top:497px;width:78px;height:30px;background:#ffc7ce"></div>
<div class="a" style="left:1209px;top:497px;width:76px;height:30px;background:#c6efce"></div>
<div class="a" style="left:1358px;top:497px;width:75px;height:30px;background:#c6efce"></div>
<div class="a" style="left:1506px;top:497px;width:73px;height:30px;background:#c6efce"></div>
<div class="a" style="left:1578px;top:497px;width:67px;height:30px;background:#70ad47"></div>
<div class="a" style="left:1644px;top:497px;width:95px;height:30px;background:#c6efce"></div>
<div class="a" style="left:499px;top:527px;width:87px;height:30px;background:#cde9d6"></div>
<div class="a" style="left:585px;top:527px;width:87px;height:30px;background:#daeee1"></div>
<div class="a" style="left:797px;top:527px;width:78px;height:30px;background:#c6efce"></div>
<div class="a" style="left:874px;top:527px;width:63px;height:30px;background:#5b9bd5"></div>
<div class="a" style="left:1209px;top:527px;width:76px;height:30px;background:#c6efce"></div>
<div class="a" style="left:1358px;top:527px;width:75px;height:30px;background:#c6efce"></div>
<div class="a" style="left:1506px;top:527px;width:73px;height:30px;background:#c6efce"></div>
<div class="a" style="left:1578px;top:527px;width:67px;height:30px;background:#70ad47"></div>
<div class="a" style="left:1644px;top:527px;width:95px;height:30px;background:#c6efce"></div>
<div class="a" style="left:499px;top:557px;width:87px;height:30px;background:#d7eddf"></div>
<div class="a" style="left:585px;top:557px;width:87px;height:30px;background:#e2f1e8"></div>
<div class="a" style="left:797px;top:557px;width:78px;height:30px;background:#c6efce"></div>
<div class="a" style="left:874px;top:557px;width:63px;height:30px;background:#5b9bd5"></div>
<div class="a" style="left:1209px;top:557px;width:76px;height:30px;background:#c6efce"></div>
<div class="a" style="left:1358px;top:557px;width:75px;height:30px;background:#c6efce"></div>
<div class="a" style="left:1506px;top:557px;width:73px;height:30px;background:#c6efce"></div>
<div class="a" style="left:1578px;top:557px;width:67px;height:30px;background:#70ad47"></div>
<div class="a" style="left:1644px;top:557px;width:95px;height:30px;background:#c6efce"></div>
<div class="a" style="left:499px;top:587px;width:87px;height:30px;background:#cfead9"></div>
<div class="a" style="left:585px;top:587px;width:87px;height:30px;background:#dcefe4"></div>
<div class="a" style="left:797px;top:587px;width:78px;height:30px;background:#c6efce"></div>
<div class="a" style="left:874px;top:587px;width:63px;height:30px;background:#5b9bd5"></div>
<div class="a" style="left:1209px;top:587px;width:76px;height:30px;background:#c6efce"></div>
<div class="a" style="left:1358px;top:587px;width:75px;height:30px;background:#c6efce"></div>
<div class="a" style="left:1506px;top:587px;width:73px;height:30px;background:#c6efce"></div>
<div class="a" style="left:1578px;top:587px;width:67px;height:30px;background:#70ad47"></div>
<div class="a" style="left:1644px;top:587px;width:95px;height:30px;background:#c6efce"></div>
<div class="a" style="left:499px;top:617px;width:87px;height:30px;background:#edf6f2"></div>
<div class="a" style="left:585px;top:617px;width:87px;height:30px;background:#f1f8f6"></div>
<div class="a" style="left:797px;top:617px;width:78px;height:30px;background:#ffc7ce"></div>
<div class="a" style="left:874px;top:617px;width:63px;height:30px;background:#ffc000"></div>
<div class="a" style="left:1209px;top:617px;width:76px;height:30px;background:#ffc7ce"></div>
<div class="a" style="left:1358px;top:617px;width:75px;height:30px;background:#c6efce"></div>
<div class="a" style="left:1506px;top:617px;width:73px;height:30px;background:#c6efce"></div>
<div class="a" style="left:1578px;top:617px;width:67px;height:30px;background:#70ad47"></div>
<div class="a" style="left:1644px;top:617px;width:95px;height:30px;background:#c6efce"></div>
<div class="a" style="left:499px;top:647px;width:87px;height:30px;background:#fcedf0"></div>
<div class="a" style="left:585px;top:647px;width:87px;height:30px;background:#fcf3f6"></div>
<div class="a" style="left:797px;top:647px;width:78px;height:30px;background:#ffc7ce"></div>
<div class="a" style="left:874px;top:647px;width:63px;height:30px;background:#ffc000"></div>
<div class="a" style="left:1209px;top:647px;width:76px;height:30px;background:#ffc7ce"></div>
<div class="a" style="left:1358px;top:647px;width:75px;height:30px;background:#c6efce"></div>
<div class="a" style="left:1506px;top:647px;width:73px;height:30px;background:#c6efce"></div>
<div class="a" style="left:1578px;top:647px;width:67px;height:30px;background:#70ad47"></div>
<div class="a" style="left:1644px;top:647px;width:95px;height:30px;background:#ffc7ce"></div>
<div class="a" style="left:499px;top:677px;width:87px;height:30px;background:#fabcbf"></div>
<div class="a" style="left:585px;top:677px;width:87px;height:30px;background:#fbd3d6"></div>
<div class="a" style="left:797px;top:677px;width:78px;height:30px;background:#ffc7ce"></div>
<div class="a" style="left:874px;top:677px;width:63px;height:30px;background:#ffc000"></div>
<div class="a" style="left:1209px;top:677px;width:76px;height:30px;background:#ffc7ce"></div>
<div class="a" style="left:1358px;top:677px;width:75px;height:30px;background:#c6efce"></div>
<div class="a" style="left:1506px;top:677px;width:73px;height:30px;background:#c6efce"></div>
<div class="a" style="left:1578px;top:677px;width:67px;height:30px;background:#70ad47"></div>
<div class="a" style="left:1644px;top:677px;width:95px;height:30px;background:#c6efce"></div>
<div class="a" style="left:499px;top:707px;width:87px;height:30px;background:#e4f2ea"></div>
<div class="a" style="left:585px;top:707px;width:87px;height:30px;background:#ecf6f1"></div>
<div class="a" style="left:797px;top:707px;width:78px;height:30px;background:#ffc7ce"></div>
<div class="a" style="left:874px;top:707px;width:63px;height:30px;background:#ffc000"></div>
<div class="a" style="left:1209px;top:707px;width:76px;height:30px;background:#c6efce"></div>
<div class="a" style="left:1358px;top:707px;width:75px;height:30px;background:#c6efce"></div>
<div class="a" style="left:1506px;top:707px;width:73px;height:30px;background:#c6efce"></div>
<div class="a" style="left:1578px;top:707px;width:67px;height:30px;background:#70ad47"></div>
<div class="a" style="left:1644px;top:707px;width:95px;height:30px;background:#c6efce"></div>
<div class="a" style="left:499px;top:737px;width:87px;height:30px;background:#daeee2"></div>
<div class="a" style="left:585px;top:737px;width:87px;height:30px;background:#e4f2eb"></div>
<div class="a" style="left:797px;top:737px;width:78px;height:30px;background:#c6efce"></div>
<div class="a" style="left:1209px;top:737px;width:76px;height:30px;background:#c6efce"></div>
<div class="a" style="left:1358px;top:737px;width:75px;height:30px;background:#c6efce"></div>
<div class="a" style="left:1506px;top:737px;width:73px;height:30px;background:#c6efce"></div>
<div class="a" style="left:1578px;top:737px;width:67px;height:30px;background:#70ad47"></div>
<div class="a" style="left:1644px;top:737px;width:95px;height:30px;background:#c6efce"></div>
<div class="a" style="left:499px;top:767px;width:87px;height:30px;background:#d5ecde"></div>
<div class="a" style="left:585px;top:767px;width:87px;height:30px;background:#e2f1e8"></div>
<div class="a" style="left:797px;top:767px;width:78px;height:30px;background:#ffc7ce"></div>
<div class="a" style="left:1209px;top:767px;width:76px;height:30px;background:#c6efce"></div>
<div class="a" style="left:1358px;top:767px;width:75px;height:30px;background:#c6efce"></div>
<div class="a" style="left:1506px;top:767px;width:73px;height:30px;background:#c6efce"></div>
<div class="a" style="left:1644px;top:767px;width:95px;height:30px;background:#c6efce"></div>
<div class="a" style="left:499px;top:797px;width:87px;height:30px;background:#fcf7fa"></div>
<div class="a" style="left:585px;top:797px;width:87px;height:30px;background:#fcf8fb"></div>
<div class="a" style="left:797px;top:797px;width:78px;height:30px;background:#c6efce"></div>
<div class="a" style="left:1209px;top:797px;width:76px;height:30px;background:#c6efce"></div>
<div class="a" style="left:1358px;top:797px;width:75px;height:30px;background:#c6efce"></div>
<div class="a" style="left:1506px;top:797px;width:73px;height:30px;background:#c6efce"></div>
<div class="a" style="left:1644px;top:797px;width:95px;height:30px;background:#ffc7ce"></div>
<div class="a" style="left:499px;top:827px;width:87px;height:30px;background:#e3f2e9"></div>
<div class="a" style="left:585px;top:827px;width:87px;height:30px;background:#ecf6f1"></div>
<div class="a" style="left:797px;top:827px;width:78px;height:30px;background:#c6efce"></div>
<div class="a" style="left:1209px;top:827px;width:76px;height:30px;background:#c6efce"></div>
<div class="a" style="left:1358px;top:827px;width:75px;height:30px;background:#c6efce"></div>
<div class="a" style="left:1506px;top:827px;width:73px;height:30px;background:#c6efce"></div>
<div class="a" style="left:1578px;top:827px;width:67px;height:30px;background:#70ad47"></div>
<div class="a" style="left:1644px;top:827px;width:95px;height:30px;background:#c6efce"></div>
<div class="a" style="left:499px;top:857px;width:87px;height:30px;background:#fcf4f7"></div>
<div class="a" style="left:585px;top:857px;width:87px;height:30px;background:#fcf6f9"></div>
<div class="a" style="left:797px;top:857px;width:78px;height:30px;background:#ffc7ce"></div>
<div class="a" style="left:1209px;top:857px;width:76px;height:30px;background:#c6efce"></div>
<div class="a" style="left:1358px;top:857px;width:75px;height:30px;background:#c6efce"></div>
<div class="a" style="left:1506px;top:857px;width:73px;height:30px;background:#c6efce"></div>
<div class="a" style="left:1578px;top:857px;width:67px;height:30px;background:#70ad47"></div>
<div class="a" style="left:1644px;top:857px;width:95px;height:30px;background:#c6efce"></div>
<div class="a" style="left:499px;top:887px;width:87px;height:30px;background:#f1f7f5"></div>
<div class="a" style="left:585px;top:887px;width:87px;height:30px;background:#f4f9f8"></div>
<div class="a" style="left:797px;top:887px;width:78px;height:30px;background:#c6efce"></div>
<div class="a" style="left:874px;top:887px;width:63px;height:30px;background:#5b9bd5"></div>
<div class="a" style="left:1209px;top:887px;width:76px;height:30px;background:#c6efce"></div>
<div class="a" style="left:1358px;top:887px;width:75px;height:30px;background:#c6efce"></div>
<div class="a" style="left:1506px;top:887px;width:73px;height:30px;background:#c6efce"></div>
<div class="a" style="left:1578px;top:887px;width:67px;height:30px;background:#70ad47"></div>
<div class="a" style="left:1644px;top:887px;width:95px;height:30px;background:#c6efce"></div>
<div class="a" style="left:499px;top:917px;width:87px;height:30px;background:#f9fbfd"></div>
<div class="a" style="left:585px;top:917px;width:87px;height:30px;background:#f9fbfd"></div>
<div class="a" style="left:797px;top:917px;width:78px;height:30px;background:#c6efce"></div>
<div class="a" style="left:874px;top:917px;width:63px;height:30px;background:#5b9bd5"></div>
<div class="a" style="left:1209px;top:917px;width:76px;height:30px;background:#c6efce"></div>
<div class="a" style="left:1358px;top:917px;width:75px;height:30px;background:#c6efce"></div>
<div class="a" style="left:1506px;top:917px;width:73px;height:30px;background:#c6efce"></div>
<div class="a" style="left:1578px;top:917px;width:67px;height:30px;background:#70ad47"></div>
<div class="a" style="left:1644px;top:917px;width:95px;height:30px;background:#c6efce"></div>
<div class="a" style="left:499px;top:947px;width:87px;height:30px;background:#dcefe4"></div>
<div class="a" style="left:585px;top:947px;width:87px;height:30px;background:#e7f3ed"></div>
<div class="a" style="left:797px;top:947px;width:78px;height:30px;background:#c6efce"></div>
<div class="a" style="left:874px;top:947px;width:63px;height:30px;background:#5b9bd5"></div>
<div class="a" style="left:1209px;top:947px;width:76px;height:30px;background:#c6efce"></div>
<div class="a" style="left:1358px;top:947px;width:75px;height:30px;background:#c6efce"></div>
<div class="a" style="left:1506px;top:947px;width:73px;height:30px;background:#c6efce"></div>
<div class="a" style="left:1644px;top:947px;width:95px;height:30px;background:#c6efce"></div>
<div class="a t" style="left:-311.0px;width:800px;text-align:center;top:293.76px;font-size:18px;color:#262626;">本日</div>
<div class="a t" style="left:-214.5px;width:800px;text-align:center;top:293.76px;font-size:18px;color:#262626;">始値</div>
<div class="a t" style="left:-126.5px;width:800px;text-align:center;top:293.76px;font-size:18px;color:#262626;">高値</div>
<div class="a t" style="left:-38.5px;width:800px;text-align:center;top:293.76px;font-size:18px;color:#262626;">安値</div>
<div class="a t" style="left:52.5px;width:800px;text-align:center;top:293.76px;font-size:18px;color:#262626;">終値</div>
<div class="a t" style="left:142.5px;width:800px;text-align:center;top:293.76px;font-size:18px;color:#262626;">前日比</div>
<div class="a t" style="left:228.5px;width:800px;text-align:center;top:293.76px;font-size:18px;color:#262626;">前日比%</div>
<div class="a t" style="left:334.5px;width:800px;text-align:center;top:293.76px;font-size:18px;color:#262626;">売買高(株)</div>
<div class="a t" style="left:436.0px;width:800px;text-align:center;top:293.76px;font-size:18px;color:#9c0006;">陽線陰線</div>
<div class="a t" style="left:505.5px;width:800px;text-align:center;top:293.76px;font-size:18px;color:#262626;">連続数</div>
<div class="a t" style="left:595.0px;width:800px;text-align:center;top:293.76px;font-size:18px;color:#262626;">終値前日比較</div>
<div class="a t" style="left:693.5px;width:800px;text-align:center;top:293.76px;font-size:18px;color:#262626;">上幅下幅</div>
<div class="a t" style="left:1137px;top:293.76px;font-size:18px;color:#262626;">5日比較</div>
<div class="a t" style="left:1288px;top:293.76px;font-size:18px;color:#262626;">25日比較</div>
<div class="a t" style="left:1436px;top:293.76px;font-size:18px;color:#262626;">60日比</div>
<div class="a" style="left:1579px;top:288px;width:65px;height:29px;overflow:hidden">
<div class="a t" style="left:5px;top:5.76px;font-size:18px;color:#000;">トレンド</div>
</div>
<div class="a t" style="left:1291.5px;width:800px;text-align:center;top:293.76px;font-size:18px;color:#006100;">空売り比率</div>
<div class="a t" style="left:-311.0px;width:800px;text-align:center;top:323.76px;font-size:18px;color:#262626;"><span style="display:inline-block;transform:scaleX(1.1)">2021/7/30</span></div>
<div class="a t" style="left:-214.5px;width:800px;text-align:center;top:323.76px;font-size:18px;color:#262626;">27,677.89</div>
<div class="a t" style="left:-126.5px;width:800px;text-align:center;top:323.76px;font-size:18px;color:#262626;">27,699.35</div>
<div class="a t" style="left:-38.5px;width:800px;text-align:center;top:323.76px;font-size:18px;color:#262626;">27,272.49</div>
<div class="a t" style="left:52.5px;width:800px;text-align:center;top:323.76px;font-size:18px;color:#262626;">27,283.59</div>
<div class="a t" style="left:142.5px;width:800px;text-align:center;top:323.76px;font-size:18px;color:#262626;">-498.83</div>
<div class="a t" style="left:228.5px;width:800px;text-align:center;top:323.76px;font-size:18px;color:#262626;">-1.8</div>
<div class="a t" style="left:334.5px;width:800px;text-align:center;top:323.76px;font-size:18px;color:#262626;">1,017,033,600</div>
<div class="a t" style="left:436.0px;width:800px;text-align:center;top:323.76px;font-size:18px;color:#006100;">陰</div>
<div class="a t" style="left:505.5px;width:800px;text-align:center;top:323.76px;font-size:18px;color:#262626;">1</div>
<div class="a t" style="left:250px;width:800px;text-align:right;top:323.76px;font-size:18px;color:#262626;">-498.83</div>
<div class="a t" style="left:406px;width:800px;text-align:right;top:323.76px;font-size:18px;color:#262626;">27690</div>
<div class="a t" style="left:481px;width:800px;text-align:right;top:323.76px;font-size:18px;color:#006100;">0.9853</div>
<div class="a t" style="left:629px;width:800px;text-align:right;top:323.76px;font-size:18px;color:#006100;">0.9648</div>
<div class="a t" style="left:775px;width:800px;text-align:right;top:323.76px;font-size:18px;color:#006100;">0.956</div>
<div class="a t" style="left:555px;width:800px;text-align:right;top:323.76px;font-size:18px;color:#262626;">28278</div>
<div class="a t" style="left:703px;width:800px;text-align:right;top:323.76px;font-size:18px;color:#262626;">28540</div>
<div class="a t" style="left:1582px;top:323.76px;font-size:18px;color:#262626;">下降</div>
<div class="a t" style="left:935px;width:800px;text-align:right;top:323.76px;font-size:18px;color:#006100;">45.4</div>
<svg class="a" style="left:1285px;top:318px;" width="8" height="8" viewBox="0 0 8 8"><path d="M0 0h7L0 7z" fill="#008000"/></svg>
<svg class="a" style="left:1433px;top:318px;" width="8" height="8" viewBox="0 0 8 8"><path d="M0 0h7L0 7z" fill="#008000"/></svg>
<div class="a t" style="left:-311.0px;width:800px;text-align:center;top:353.76px;font-size:18px;color:#262626;"><span style="display:inline-block;transform:scaleX(1.1)">2021/7/29</span></div>
<div class="a t" style="left:-214.5px;width:800px;text-align:center;top:353.76px;font-size:18px;color:#262626;">27,722.61</div>
<div class="a t" style="left:-126.5px;width:800px;text-align:center;top:353.76px;font-size:18px;color:#262626;">27,798.05</div>
<div class="a t" style="left:-38.5px;width:800px;text-align:center;top:353.76px;font-size:18px;color:#262626;">27,663.41</div>
<div class="a t" style="left:52.5px;width:800px;text-align:center;top:353.76px;font-size:18px;color:#262626;">27,782.42</div>
<div class="a t" style="left:142.5px;width:800px;text-align:center;top:353.76px;font-size:18px;color:#262626;">200.76</div>
<div class="a t" style="left:228.5px;width:800px;text-align:center;top:353.76px;font-size:18px;color:#262626;">0.7</div>
<div class="a t" style="left:334.5px;width:800px;text-align:center;top:353.76px;font-size:18px;color:#262626;">909,202,300</div>
<div class="a t" style="left:436.0px;width:800px;text-align:center;top:353.76px;font-size:18px;color:#9c0006;">陽</div>
<div class="a t" style="left:505.5px;width:800px;text-align:center;top:353.76px;font-size:18px;color:#262626;">1</div>
<div class="a t" style="left:250px;width:800px;text-align:right;top:353.76px;font-size:18px;color:#262626;">200.76</div>
<div class="a t" style="left:406px;width:800px;text-align:right;top:353.76px;font-size:18px;color:#262626;">27743</div>
<div class="a t" style="left:481px;width:800px;text-align:right;top:353.76px;font-size:18px;color:#9c0006;">1.0014</div>
<div class="a t" style="left:629px;width:800px;text-align:right;top:353.76px;font-size:18px;color:#006100;">0.9803</div>
<div class="a t" style="left:775px;width:800px;text-align:right;top:353.76px;font-size:18px;color:#006100;">0.9726</div>
<div class="a t" style="left:555px;width:800px;text-align:right;top:353.76px;font-size:18px;color:#262626;">28342</div>
<div class="a t" style="left:703px;width:800px;text-align:right;top:353.76px;font-size:18px;color:#262626;">28566</div>
<div class="a t" style="left:1582px;top:353.76px;font-size:18px;color:#262626;">下降</div>
<div class="a t" style="left:935px;width:800px;text-align:right;top:353.76px;font-size:18px;color:#006100;">46.4</div>
<svg class="a" style="left:1285px;top:348px;" width="8" height="8" viewBox="0 0 8 8"><path d="M0 0h7L0 7z" fill="#008000"/></svg>
<svg class="a" style="left:1433px;top:348px;" width="8" height="8" viewBox="0 0 8 8"><path d="M0 0h7L0 7z" fill="#008000"/></svg>
<div class="a t" style="left:-311.0px;width:800px;text-align:center;top:383.76px;font-size:18px;color:#262626;"><span style="display:inline-block;transform:scaleX(1.1)">2021/7/28</span></div>
<div class="a t" style="left:-214.5px;width:800px;text-align:center;top:383.76px;font-size:18px;color:#262626;">27,674.99</div>
<div class="a t" style="left:-126.5px;width:800px;text-align:center;top:383.76px;font-size:18px;color:#262626;">27,809.86</div>
<div class="a t" style="left:-38.5px;width:800px;text-align:center;top:383.76px;font-size:18px;color:#262626;">27,466.99</div>
<div class="a t" style="left:52.5px;width:800px;text-align:center;top:383.76px;font-size:18px;color:#262626;">27,581.66</div>
<div class="a t" style="left:142.5px;width:800px;text-align:center;top:383.76px;font-size:18px;color:#262626;">-388.56</div>
<div class="a t" style="left:228.5px;width:800px;text-align:center;top:383.76px;font-size:18px;color:#262626;">-1.4</div>
<div class="a t" style="left:334.5px;width:800px;text-align:center;top:383.76px;font-size:18px;color:#262626;">918,664,400</div>
<div class="a t" style="left:436.0px;width:800px;text-align:center;top:383.76px;font-size:18px;color:#006100;">陰</div>
<div class="a t" style="left:505.5px;width:800px;text-align:center;top:383.76px;font-size:18px;color:#262626;">1</div>
<div class="a t" style="left:250px;width:800px;text-align:right;top:383.76px;font-size:18px;color:#262626;">-388.56</div>
<div class="a t" style="left:406px;width:800px;text-align:right;top:383.76px;font-size:18px;color:#262626;">27664</div>
<div class="a t" style="left:481px;width:800px;text-align:right;top:383.76px;font-size:18px;color:#006100;">0.997</div>
<div class="a t" style="left:629px;width:800px;text-align:right;top:383.76px;font-size:18px;color:#006100;">0.9717</div>
<div class="a t" style="left:775px;width:800px;text-align:right;top:383.76px;font-size:18px;color:#006100;">0.9648</div>
<div class="a t" style="left:555px;width:800px;text-align:right;top:383.76px;font-size:18px;color:#262626;">28386</div>
<div class="a t" style="left:703px;width:800px;text-align:right;top:383.76px;font-size:18px;color:#262626;">28587</div>
<div class="a t" style="left:1582px;top:383.76px;font-size:18px;color:#262626;">下降</div>
<div class="a t" style="left:935px;width:800px;text-align:right;top:383.76px;font-size:18px;color:#006100;">44.6</div>
<svg class="a" style="left:1285px;top:378px;" width="8" height="8" viewBox="0 0 8 8"><path d="M0 0h7L0 7z" fill="#008000"/></svg>
<svg class="a" style="left:1433px;top:378px;" width="8" height="8" viewBox="0 0 8 8"><path d="M0 0h7L0 7z" fill="#008000"/></svg>
<div class="a t" style="left:-311.0px;width:800px;text-align:center;top:413.76px;font-size:18px;color:#262626;"><span style="display:inline-block;transform:scaleX(1.1)">2021/7/27</span></div>
<div class="a t" style="left:-214.5px;width:800px;text-align:center;top:413.76px;font-size:18px;color:#262626;">27,911.93</div>
<div class="a t" style="left:-126.5px;width:800px;text-align:center;top:413.76px;font-size:18px;color:#262626;">28,036.23</div>
<div class="a t" style="left:-38.5px;width:800px;text-align:center;top:413.76px;font-size:18px;color:#262626;">27,862.69</div>
<div class="a t" style="left:52.5px;width:800px;text-align:center;top:413.76px;font-size:18px;color:#262626;">27,970.22</div>
<div class="a t" style="left:142.5px;width:800px;text-align:center;top:413.76px;font-size:18px;color:#262626;">136.93</div>
<div class="a t" style="left:228.5px;width:800px;text-align:center;top:413.76px;font-size:18px;color:#262626;">0.5</div>
<div class="a t" style="left:334.5px;width:800px;text-align:center;top:413.76px;font-size:18px;color:#262626;">804,628,900</div>
<div class="a t" style="left:436.0px;width:800px;text-align:center;top:413.76px;font-size:18px;color:#9c0006;">陽</div>
<div class="a t" style="left:505.5px;width:800px;text-align:center;top:413.76px;font-size:18px;color:#262626;">1</div>
<div class="a t" style="left:250px;width:800px;text-align:right;top:413.76px;font-size:18px;color:#262626;">136.93</div>
<div class="a t" style="left:406px;width:800px;text-align:right;top:413.76px;font-size:18px;color:#262626;">27678</div>
<div class="a t" style="left:481px;width:800px;text-align:right;top:413.76px;font-size:18px;color:#9c0006;">1.0105</div>
<div class="a t" style="left:629px;width:800px;text-align:right;top:413.76px;font-size:18px;color:#006100;">0.9848</div>
<div class="a t" style="left:775px;width:800px;text-align:right;top:413.76px;font-size:18px;color:#006100;">0.9776</div>
<div class="a t" style="left:555px;width:800px;text-align:right;top:413.76px;font-size:18px;color:#262626;">28403</div>
<div class="a t" style="left:703px;width:800px;text-align:right;top:413.76px;font-size:18px;color:#262626;">28611</div>
<div class="a t" style="left:1582px;top:413.76px;font-size:18px;color:#262626;">下降</div>
<div class="a t" style="left:935px;width:800px;text-align:right;top:413.76px;font-size:18px;color:#006100;">40.8</div>
<svg class="a" style="left:1285px;top:408px;" width="8" height="8" viewBox="0 0 8 8"><path d="M0 0h7L0 7z" fill="#008000"/></svg>
<svg class="a" style="left:1433px;top:408px;" width="8" height="8" viewBox="0 0 8 8"><path d="M0 0h7L0 7z" fill="#008000"/></svg>
<div class="a t" style="left:-311.0px;width:800px;text-align:center;top:443.76px;font-size:18px;color:#262626;"><span style="display:inline-block;transform:scaleX(1.1)">2021/7/26</span></div>
<div class="a t" style="left:-214.5px;width:800px;text-align:center;top:443.76px;font-size:18px;color:#262626;">27,990.47</div>
<div class="a t" style="left:-126.5px;width:800px;text-align:center;top:443.76px;font-size:18px;color:#262626;">28,036.47</div>
<div class="a t" style="left:-38.5px;width:800px;text-align:center;top:443.76px;font-size:18px;color:#262626;">27,786.44</div>
<div class="a t" style="left:52.5px;width:800px;text-align:center;top:443.76px;font-size:18px;color:#262626;">27,833.29</div>
<div class="a t" style="left:142.5px;width:800px;text-align:center;top:443.76px;font-size:18px;color:#262626;">285.29</div>
<div class="a t" style="left:228.5px;width:800px;text-align:center;top:443.76px;font-size:18px;color:#262626;">1</div>
<div class="a t" style="left:334.5px;width:800px;text-align:center;top:443.76px;font-size:18px;color:#262626;">850,070,400</div>
<div class="a t" style="left:436.0px;width:800px;text-align:center;top:443.76px;font-size:18px;color:#006100;">陰</div>
<div class="a t" style="left:505.5px;width:800px;text-align:center;top:443.76px;font-size:18px;color:#262626;">2</div>
<div class="a t" style="left:250px;width:800px;text-align:right;top:443.76px;font-size:18px;color:#262626;">445.13</div>
<div class="a t" style="left:406px;width:800px;text-align:right;top:443.76px;font-size:18px;color:#262626;">27685</div>
<div class="a t" style="left:481px;width:800px;text-align:right;top:443.76px;font-size:18px;color:#9c0006;">1.0054</div>
<div class="a t" style="left:629px;width:800px;text-align:right;top:443.76px;font-size:18px;color:#006100;">0.9786</div>
<div class="a t" style="left:775px;width:800px;text-align:right;top:443.76px;font-size:18px;color:#006100;">0.9722</div>
<div class="a t" style="left:555px;width:800px;text-align:right;top:443.76px;font-size:18px;color:#262626;">28443</div>
<div class="a t" style="left:703px;width:800px;text-align:right;top:443.76px;font-size:18px;color:#262626;">28630</div>
<div class="a t" style="left:1582px;top:443.76px;font-size:18px;color:#262626;">下降</div>
<div class="a t" style="left:935px;width:800px;text-align:right;top:443.76px;font-size:18px;color:#006100;">40.3</div>
<svg class="a" style="left:1285px;top:438px;" width="8" height="8" viewBox="0 0 8 8"><path d="M0 0h7L0 7z" fill="#008000"/></svg>
<svg class="a" style="left:1433px;top:438px;" width="8" height="8" viewBox="0 0 8 8"><path d="M0 0h7L0 7z" fill="#008000"/></svg>
<div class="a t" style="left:-311.0px;width:800px;text-align:center;top:473.76px;font-size:18px;color:#262626;"><span style="display:inline-block;transform:scaleX(1.1)">2021/7/21</span></div>
<div class="a t" style="left:-214.5px;width:800px;text-align:center;top:473.76px;font-size:18px;color:#262626;">27,747.06</div>
<div class="a t" style="left:-126.5px;width:800px;text-align:center;top:473.76px;font-size:18px;color:#262626;">27,882.43</div>
<div class="a t" style="left:-38.5px;width:800px;text-align:center;top:473.76px;font-size:18px;color:#262626;">27,438.07</div>
<div class="a t" style="left:52.5px;width:800px;text-align:center;top:473.76px;font-size:18px;color:#262626;">27,548.00</div>
<div class="a t" style="left:142.5px;width:800px;text-align:center;top:473.76px;font-size:18px;color:#262626;">159.84</div>
<div class="a t" style="left:228.5px;width:800px;text-align:center;top:473.76px;font-size:18px;color:#262626;">0.6</div>
<div class="a t" style="left:334.5px;width:800px;text-align:center;top:473.76px;font-size:18px;color:#262626;">819,862,500</div>
<div class="a t" style="left:436.0px;width:800px;text-align:center;top:473.76px;font-size:18px;color:#006100;">陰</div>
<div class="a t" style="left:505.5px;width:800px;text-align:center;top:473.76px;font-size:18px;color:#262626;">1</div>
<div class="a t" style="left:250px;width:800px;text-align:right;top:473.76px;font-size:18px;color:#262626;">159.84</div>
<div class="a t" style="left:406px;width:800px;text-align:right;top:473.76px;font-size:18px;color:#262626;">27774</div>
<div class="a t" style="left:481px;width:800px;text-align:right;top:473.76px;font-size:18px;color:#006100;">0.9919</div>
<div class="a t" style="left:629px;width:800px;text-align:right;top:473.76px;font-size:18px;color:#006100;">0.9669</div>
<div class="a t" style="left:775px;width:800px;text-align:right;top:473.76px;font-size:18px;color:#006100;">0.9615</div>
<div class="a t" style="left:555px;width:800px;text-align:right;top:473.76px;font-size:18px;color:#262626;">28490</div>
<div class="a t" style="left:703px;width:800px;text-align:right;top:473.76px;font-size:18px;color:#262626;">28650</div>
<div class="a t" style="left:1582px;top:473.76px;font-size:18px;color:#262626;">下降</div>
<div class="a t" style="left:935px;width:800px;text-align:right;top:473.76px;font-size:18px;color:#006100;">43.8</div>
<svg class="a" style="left:1285px;top:468px;" width="8" height="8" viewBox="0 0 8 8"><path d="M0 0h7L0 7z" fill="#008000"/></svg>
<svg class="a" style="left:1433px;top:468px;" width="8" height="8" viewBox="0 0 8 8"><path d="M0 0h7L0 7z" fill="#008000"/></svg>
<div class="a t" style="left:-311.0px;width:800px;text-align:center;top:503.76px;font-size:18px;color:#262626;"><span style="display:inline-block;transform:scaleX(1.1)">2021/7/20</span></div>
<div class="a t" style="left:-214.5px;width:800px;text-align:center;top:503.76px;font-size:18px;color:#262626;">27,351.80</div>
<div class="a t" style="left:-126.5px;width:800px;text-align:center;top:503.76px;font-size:18px;color:#262626;">27,564.52</div>
<div class="a t" style="left:-38.5px;width:800px;text-align:center;top:503.76px;font-size:18px;color:#262626;">27,330.15</div>
<div class="a t" style="left:52.5px;width:800px;text-align:center;top:503.76px;font-size:18px;color:#262626;">27,388.16</div>
<div class="a t" style="left:142.5px;width:800px;text-align:center;top:503.76px;font-size:18px;color:#262626;">-264.58</div>
<div class="a t" style="left:228.5px;width:800px;text-align:center;top:503.76px;font-size:18px;color:#262626;">-1</div>
<div class="a t" style="left:334.5px;width:800px;text-align:center;top:503.76px;font-size:18px;color:#262626;">1,086,460,200</div>
<div class="a t" style="left:436.0px;width:800px;text-align:center;top:503.76px;font-size:18px;color:#9c0006;">陽</div>
<div class="a t" style="left:505.5px;width:800px;text-align:center;top:503.76px;font-size:18px;color:#262626;">1</div>
<div class="a t" style="left:250px;width:800px;text-align:right;top:503.76px;font-size:18px;color:#262626;">-264.58</div>
<div class="a t" style="left:406px;width:800px;text-align:right;top:503.76px;font-size:18px;color:#262626;">27986</div>
<div class="a t" style="left:481px;width:800px;text-align:right;top:503.76px;font-size:18px;color:#006100;">0.9786</div>
<div class="a t" style="left:629px;width:800px;text-align:right;top:503.76px;font-size:18px;color:#006100;">0.959</div>
<div class="a t" style="left:775px;width:800px;text-align:right;top:503.76px;font-size:18px;color:#006100;">0.9551</div>
<div class="a t" style="left:555px;width:800px;text-align:right;top:503.76px;font-size:18px;color:#262626;">28560</div>
<div class="a t" style="left:703px;width:800px;text-align:right;top:503.76px;font-size:18px;color:#262626;">28677</div>
<div class="a t" style="left:1582px;top:503.76px;font-size:18px;color:#262626;">下降</div>
<div class="a t" style="left:935px;width:800px;text-align:right;top:503.76px;font-size:18px;color:#006100;">46.7</div>
<svg class="a" style="left:1285px;top:498px;" width="8" height="8" viewBox="0 0 8 8"><path d="M0 0h7L0 7z" fill="#008000"/></svg>
<svg class="a" style="left:1433px;top:498px;" width="8" height="8" viewBox="0 0 8 8"><path d="M0 0h7L0 7z" fill="#008000"/></svg>
<div class="a t" style="left:-311.0px;width:800px;text-align:center;top:533.76px;font-size:18px;color:#262626;"><span style="display:inline-block;transform:scaleX(1.1)">2021/7/19</span></div>
<div class="a t" style="left:-214.5px;width:800px;text-align:center;top:533.76px;font-size:18px;color:#262626;">27,663.40</div>
<div class="a t" style="left:-126.5px;width:800px;text-align:center;top:533.76px;font-size:18px;color:#262626;">27,792.52</div>
<div class="a t" style="left:-38.5px;width:800px;text-align:center;top:533.76px;font-size:18px;color:#262626;">27,493.63</div>
<div class="a t" style="left:52.5px;width:800px;text-align:center;top:533.76px;font-size:18px;color:#262626;">27,652.74</div>
<div class="a t" style="left:142.5px;width:800px;text-align:center;top:533.76px;font-size:18px;color:#262626;">-350.34</div>
<div class="a t" style="left:228.5px;width:800px;text-align:center;top:533.76px;font-size:18px;color:#262626;">-1.3</div>
<div class="a t" style="left:334.5px;width:800px;text-align:center;top:533.76px;font-size:18px;color:#262626;">822,747,700</div>
<div class="a t" style="left:436.0px;width:800px;text-align:center;top:533.76px;font-size:18px;color:#006100;">陰</div>
<div class="a t" style="left:505.5px;width:800px;text-align:center;top:533.76px;font-size:18px;color:#262626;">3</div>
<div class="a t" style="left:250px;width:800px;text-align:right;top:533.76px;font-size:18px;color:#262626;">-955.75</div>
<div class="a t" style="left:406px;width:800px;text-align:right;top:533.76px;font-size:18px;color:#262626;">28252</div>
<div class="a t" style="left:481px;width:800px;text-align:right;top:533.76px;font-size:18px;color:#006100;">0.9788</div>
<div class="a t" style="left:629px;width:800px;text-align:right;top:533.76px;font-size:18px;color:#006100;">0.9655</div>
<div class="a t" style="left:775px;width:800px;text-align:right;top:533.76px;font-size:18px;color:#006100;">0.9637</div>
<div class="a t" style="left:555px;width:800px;text-align:right;top:533.76px;font-size:18px;color:#262626;">28642</div>
<div class="a t" style="left:703px;width:800px;text-align:right;top:533.76px;font-size:18px;color:#262626;">28696</div>
<div class="a t" style="left:1582px;top:533.76px;font-size:18px;color:#262626;">下降</div>
<div class="a t" style="left:935px;width:800px;text-align:right;top:533.76px;font-size:18px;color:#006100;">46.3</div>
<svg class="a" style="left:1285px;top:528px;" width="8" height="8" viewBox="0 0 8 8"><path d="M0 0h7L0 7z" fill="#008000"/></svg>
<svg class="a" style="left:1433px;top:528px;" width="8" height="8" viewBox="0 0 8 8"><path d="M0 0h7L0 7z" fill="#008000"/></svg>
<div class="a t" style="left:-311.0px;width:800px;text-align:center;top:563.76px;font-size:18px;color:#262626;"><span style="display:inline-block;transform:scaleX(1.1)">2021/7/16</span></div>
<div class="a t" style="left:-214.5px;width:800px;text-align:center;top:563.76px;font-size:18px;color:#262626;">28,039.26</div>
<div class="a t" style="left:-126.5px;width:800px;text-align:center;top:563.76px;font-size:18px;color:#262626;">28,201.30</div>
<div class="a t" style="left:-38.5px;width:800px;text-align:center;top:563.76px;font-size:18px;color:#262626;">27,847.35</div>
<div class="a t" style="left:52.5px;width:800px;text-align:center;top:563.76px;font-size:18px;color:#262626;">28,003.08</div>
<div class="a t" style="left:142.5px;width:800px;text-align:center;top:563.76px;font-size:18px;color:#262626;">-276.01</div>
<div class="a t" style="left:228.5px;width:800px;text-align:center;top:563.76px;font-size:18px;color:#262626;">-1</div>
<div class="a t" style="left:334.5px;width:800px;text-align:center;top:563.76px;font-size:18px;color:#262626;">796,012,100</div>
<div class="a t" style="left:436.0px;width:800px;text-align:center;top:563.76px;font-size:18px;color:#006100;">陰</div>
<div class="a t" style="left:505.5px;width:800px;text-align:center;top:563.76px;font-size:18px;color:#262626;">2</div>
<div class="a t" style="left:250px;width:800px;text-align:right;top:563.76px;font-size:18px;color:#262626;">-605.41</div>
<div class="a t" style="left:406px;width:800px;text-align:right;top:563.76px;font-size:18px;color:#262626;">28436</div>
<div class="a t" style="left:481px;width:800px;text-align:right;top:563.76px;font-size:18px;color:#006100;">0.9848</div>
<div class="a t" style="left:629px;width:800px;text-align:right;top:563.76px;font-size:18px;color:#006100;">0.9756</div>
<div class="a t" style="left:775px;width:800px;text-align:right;top:563.76px;font-size:18px;color:#006100;">0.975</div>
<div class="a t" style="left:555px;width:800px;text-align:right;top:563.76px;font-size:18px;color:#262626;">28703</div>
<div class="a t" style="left:703px;width:800px;text-align:right;top:563.76px;font-size:18px;color:#262626;">28720</div>
<div class="a t" style="left:1582px;top:563.76px;font-size:18px;color:#262626;">下降</div>
<div class="a t" style="left:935px;width:800px;text-align:right;top:563.76px;font-size:18px;color:#006100;">43.4</div>
<svg class="a" style="left:1285px;top:558px;" width="8" height="8" viewBox="0 0 8 8"><path d="M0 0h7L0 7z" fill="#008000"/></svg>
<svg class="a" style="left:1433px;top:558px;" width="8" height="8" viewBox="0 0 8 8"><path d="M0 0h7L0 7z" fill="#008000"/></svg>
<div class="a t" style="left:-311.0px;width:800px;text-align:center;top:593.76px;font-size:18px;color:#262626;"><span style="display:inline-block;transform:scaleX(1.1)">2021/7/15</span></div>
<div class="a t" style="left:-214.5px;width:800px;text-align:center;top:593.76px;font-size:18px;color:#262626;">28,539.32</div>
<div class="a t" style="left:-126.5px;width:800px;text-align:center;top:593.76px;font-size:18px;color:#262626;">28,571.72</div>
<div class="a t" style="left:-38.5px;width:800px;text-align:center;top:593.76px;font-size:18px;color:#262626;">28,240.21</div>
<div class="a t" style="left:52.5px;width:800px;text-align:center;top:593.76px;font-size:18px;color:#262626;">28,279.09</div>
<div class="a t" style="left:142.5px;width:800px;text-align:center;top:593.76px;font-size:18px;color:#262626;">-329.4</div>
<div class="a t" style="left:228.5px;width:800px;text-align:center;top:593.76px;font-size:18px;color:#262626;">-1.2</div>
<div class="a t" style="left:334.5px;width:800px;text-align:center;top:593.76px;font-size:18px;color:#262626;">832,887,000</div>
<div class="a t" style="left:436.0px;width:800px;text-align:center;top:593.76px;font-size:18px;color:#006100;">陰</div>
<div class="a t" style="left:505.5px;width:800px;text-align:center;top:593.76px;font-size:18px;color:#262626;">1</div>
<div class="a t" style="left:250px;width:800px;text-align:right;top:593.76px;font-size:18px;color:#262626;">-329.4</div>
<div class="a t" style="left:406px;width:800px;text-align:right;top:593.76px;font-size:18px;color:#262626;">28423</div>
<div class="a t" style="left:481px;width:800px;text-align:right;top:593.76px;font-size:18px;color:#006100;">0.9949</div>
<div class="a t" style="left:629px;width:800px;text-align:right;top:593.76px;font-size:18px;color:#006100;">0.9839</div>
<div class="a t" style="left:775px;width:800px;text-align:right;top:593.76px;font-size:18px;color:#006100;">0.9837</div>
<div class="a t" style="left:555px;width:800px;text-align:right;top:593.76px;font-size:18px;color:#262626;">28741</div>
<div class="a t" style="left:703px;width:800px;text-align:right;top:593.76px;font-size:18px;color:#262626;">28748</div>
<div class="a t" style="left:1582px;top:593.76px;font-size:18px;color:#262626;">下降</div>
<div class="a t" style="left:935px;width:800px;text-align:right;top:593.76px;font-size:18px;color:#006100;">48.1</div>
<svg class="a" style="left:1285px;top:588px;" width="8" height="8" viewBox="0 0 8 8"><path d="M0 0h7L0 7z" fill="#008000"/></svg>
<svg class="a" style="left:1433px;top:588px;" width="8" height="8" viewBox="0 0 8 8"><path d="M0 0h7L0 7z" fill="#008000"/></svg>
<div class="a t" style="left:-311.0px;width:800px;text-align:center;top:623.76px;font-size:18px;color:#262626;"><span style="display:inline-block;transform:scaleX(1.1)">2021/7/14</span></div>
<div class="a t" style="left:-214.5px;width:800px;text-align:center;top:623.76px;font-size:18px;color:#262626;">28,517.31</div>
<div class="a t" style="left:-126.5px;width:800px;text-align:center;top:623.76px;font-size:18px;color:#262626;">28,696.80</div>
<div class="a t" style="left:-38.5px;width:800px;text-align:center;top:623.76px;font-size:18px;color:#262626;">28,482.82</div>
<div class="a t" style="left:52.5px;width:800px;text-align:center;top:623.76px;font-size:18px;color:#262626;">28,608.49</div>
<div class="a t" style="left:142.5px;width:800px;text-align:center;top:623.76px;font-size:18px;color:#262626;">-109.75</div>
<div class="a t" style="left:228.5px;width:800px;text-align:center;top:623.76px;font-size:18px;color:#262626;">-0.4</div>
<div class="a t" style="left:334.5px;width:800px;text-align:center;top:623.76px;font-size:18px;color:#262626;">851,545,600</div>
<div class="a t" style="left:436.0px;width:800px;text-align:center;top:623.76px;font-size:18px;color:#9c0006;">陽</div>
<div class="a t" style="left:505.5px;width:800px;text-align:center;top:623.76px;font-size:18px;color:#262626;">4</div>
<div class="a t" style="left:250px;width:800px;text-align:right;top:623.76px;font-size:18px;color:#262626;">490.46</div>
<div class="a t" style="left:406px;width:800px;text-align:right;top:623.76px;font-size:18px;color:#262626;">28391</div>
<div class="a t" style="left:481px;width:800px;text-align:right;top:623.76px;font-size:18px;color:#9c0006;">1.0077</div>
<div class="a t" style="left:629px;width:800px;text-align:right;top:623.76px;font-size:18px;color:#006100;">0.9945</div>
<div class="a t" style="left:775px;width:800px;text-align:right;top:623.76px;font-size:18px;color:#006100;">0.9943</div>
<div class="a t" style="left:555px;width:800px;text-align:right;top:623.76px;font-size:18px;color:#262626;">28768</div>
<div class="a t" style="left:703px;width:800px;text-align:right;top:623.76px;font-size:18px;color:#262626;">28771</div>
<div class="a t" style="left:1582px;top:623.76px;font-size:18px;color:#262626;">下降</div>
<div class="a t" style="left:935px;width:800px;text-align:right;top:623.76px;font-size:18px;color:#006100;">40.4</div>
<svg class="a" style="left:1285px;top:618px;" width="8" height="8" viewBox="0 0 8 8"><path d="M0 0h7L0 7z" fill="#008000"/></svg>
<svg class="a" style="left:1433px;top:618px;" width="8" height="8" viewBox="0 0 8 8"><path d="M0 0h7L0 7z" fill="#008000"/></svg>
<div class="a t" style="left:-311.0px;width:800px;text-align:center;top:653.76px;font-size:18px;color:#262626;"><span style="display:inline-block;transform:scaleX(1.1)">2021/7/13</span></div>
<div class="a t" style="left:-214.5px;width:800px;text-align:center;top:653.76px;font-size:18px;color:#262626;">28,713.82</div>
<div class="a t" style="left:-126.5px;width:800px;text-align:center;top:653.76px;font-size:18px;color:#262626;">28,852.31</div>
<div class="a t" style="left:-38.5px;width:800px;text-align:center;top:653.76px;font-size:18px;color:#262626;">28,699.04</div>
<div class="a t" style="left:52.5px;width:800px;text-align:center;top:653.76px;font-size:18px;color:#262626;">28,718.24</div>
<div class="a t" style="left:142.5px;width:800px;text-align:center;top:653.76px;font-size:18px;color:#262626;">149.22</div>
<div class="a t" style="left:228.5px;width:800px;text-align:center;top:653.76px;font-size:18px;color:#262626;">0.5</div>
<div class="a t" style="left:334.5px;width:800px;text-align:center;top:653.76px;font-size:18px;color:#262626;">830,674,600</div>
<div class="a t" style="left:436.0px;width:800px;text-align:center;top:653.76px;font-size:18px;color:#9c0006;">陽</div>
<div class="a t" style="left:505.5px;width:800px;text-align:center;top:653.76px;font-size:18px;color:#262626;">3</div>
<div class="a t" style="left:250px;width:800px;text-align:right;top:653.76px;font-size:18px;color:#262626;">600.21</div>
<div class="a t" style="left:406px;width:800px;text-align:right;top:653.76px;font-size:18px;color:#262626;">28341</div>
<div class="a t" style="left:481px;width:800px;text-align:right;top:653.76px;font-size:18px;color:#9c0006;">1.0133</div>
<div class="a t" style="left:629px;width:800px;text-align:right;top:653.76px;font-size:18px;color:#006100;">0.9979</div>
<div class="a t" style="left:775px;width:800px;text-align:right;top:653.76px;font-size:18px;color:#006100;">0.9976</div>
<div class="a t" style="left:555px;width:800px;text-align:right;top:653.76px;font-size:18px;color:#262626;">28778</div>
<div class="a t" style="left:703px;width:800px;text-align:right;top:653.76px;font-size:18px;color:#262626;">28788</div>
<div class="a t" style="left:1582px;top:653.76px;font-size:18px;color:#262626;">下降</div>
<div class="a t" style="left:935px;width:800px;text-align:right;top:653.76px;font-size:18px;color:#9c0006;">39.3</div>
<svg class="a" style="left:1285px;top:648px;" width="8" height="8" viewBox="0 0 8 8"><path d="M0 0h7L0 7z" fill="#008000"/></svg>
<svg class="a" style="left:1433px;top:648px;" width="8" height="8" viewBox="0 0 8 8"><path d="M0 0h7L0 7z" fill="#008000"/></svg>
<div class="a t" style="left:-311.0px;width:800px;text-align:center;top:683.76px;font-size:18px;color:#262626;"><span style="display:inline-block;transform:scaleX(1.1)">2021/7/12</span></div>
<div class="a t" style="left:-214.5px;width:800px;text-align:center;top:683.76px;font-size:18px;color:#262626;">28,412.70</div>
<div class="a t" style="left:-126.5px;width:800px;text-align:center;top:683.76px;font-size:18px;color:#262626;">28,595.12</div>
<div class="a t" style="left:-38.5px;width:800px;text-align:center;top:683.76px;font-size:18px;color:#262626;">28,405.60</div>
<div class="a t" style="left:52.5px;width:800px;text-align:center;top:683.76px;font-size:18px;color:#262626;">28,569.02</div>
<div class="a t" style="left:142.5px;width:800px;text-align:center;top:683.76px;font-size:18px;color:#262626;">628.6</div>
<div class="a t" style="left:228.5px;width:800px;text-align:center;top:683.76px;font-size:18px;color:#262626;">2.2</div>
<div class="a t" style="left:334.5px;width:800px;text-align:center;top:683.76px;font-size:18px;color:#262626;">914,716,700</div>
<div class="a t" style="left:436.0px;width:800px;text-align:center;top:683.76px;font-size:18px;color:#9c0006;">陽</div>
<div class="a t" style="left:505.5px;width:800px;text-align:center;top:683.76px;font-size:18px;color:#262626;">2</div>
<div class="a t" style="left:250px;width:800px;text-align:right;top:683.76px;font-size:18px;color:#262626;">450.99</div>
<div class="a t" style="left:406px;width:800px;text-align:right;top:683.76px;font-size:18px;color:#262626;">28326</div>
<div class="a t" style="left:481px;width:800px;text-align:right;top:683.76px;font-size:18px;color:#9c0006;">1.0086</div>
<div class="a t" style="left:629px;width:800px;text-align:right;top:683.76px;font-size:18px;color:#006100;">0.9924</div>
<div class="a t" style="left:775px;width:800px;text-align:right;top:683.76px;font-size:18px;color:#006100;">0.9919</div>
<div class="a t" style="left:555px;width:800px;text-align:right;top:683.76px;font-size:18px;color:#262626;">28788</div>
<div class="a t" style="left:703px;width:800px;text-align:right;top:683.76px;font-size:18px;color:#262626;">28804</div>
<div class="a t" style="left:1582px;top:683.76px;font-size:18px;color:#262626;">下降</div>
<div class="a t" style="left:935px;width:800px;text-align:right;top:683.76px;font-size:18px;color:#006100;">40.7</div>
<svg class="a" style="left:1285px;top:678px;" width="8" height="8" viewBox="0 0 8 8"><path d="M0 0h7L0 7z" fill="#008000"/></svg>
<svg class="a" style="left:1433px;top:678px;" width="8" height="8" viewBox="0 0 8 8"><path d="M0 0h7L0 7z" fill="#008000"/></svg>
<div class="a t" style="left:-311.0px;width:800px;text-align:center;top:713.76px;font-size:18px;color:#262626;"><span style="display:inline-block;transform:scaleX(1.1)">2021/7/9</span></div>
<div class="a t" style="left:-214.5px;width:800px;text-align:center;top:713.76px;font-size:18px;color:#262626;">27,739.42</div>
<div class="a t" style="left:-126.5px;width:800px;text-align:center;top:713.76px;font-size:18px;color:#262626;">28,000.02</div>
<div class="a t" style="left:-38.5px;width:800px;text-align:center;top:713.76px;font-size:18px;color:#262626;">27,419.40</div>
<div class="a t" style="left:52.5px;width:800px;text-align:center;top:713.76px;font-size:18px;color:#262626;">27,940.42</div>
<div class="a t" style="left:142.5px;width:800px;text-align:center;top:713.76px;font-size:18px;color:#262626;">-177.61</div>
<div class="a t" style="left:228.5px;width:800px;text-align:center;top:713.76px;font-size:18px;color:#262626;">-0.6</div>
<div class="a t" style="left:334.5px;width:800px;text-align:center;top:713.76px;font-size:18px;color:#262626;">1,186,727,600</div>
<div class="a t" style="left:436.0px;width:800px;text-align:center;top:713.76px;font-size:18px;color:#9c0006;">陽</div>
<div class="a t" style="left:505.5px;width:800px;text-align:center;top:713.76px;font-size:18px;color:#262626;">1</div>
<div class="a t" style="left:250px;width:800px;text-align:right;top:713.76px;font-size:18px;color:#262626;">-177.61</div>
<div class="a t" style="left:406px;width:800px;text-align:right;top:713.76px;font-size:18px;color:#262626;">28332</div>
<div class="a t" style="left:481px;width:800px;text-align:right;top:713.76px;font-size:18px;color:#006100;">0.9862</div>
<div class="a t" style="left:629px;width:800px;text-align:right;top:713.76px;font-size:18px;color:#006100;">0.97</div>
<div class="a t" style="left:775px;width:800px;text-align:right;top:713.76px;font-size:18px;color:#006100;">0.9694</div>
<div class="a t" style="left:555px;width:800px;text-align:right;top:713.76px;font-size:18px;color:#262626;">28806</div>
<div class="a t" style="left:703px;width:800px;text-align:right;top:713.76px;font-size:18px;color:#262626;">28823</div>
<div class="a t" style="left:1582px;top:713.76px;font-size:18px;color:#262626;">下降</div>
<div class="a t" style="left:935px;width:800px;text-align:right;top:713.76px;font-size:18px;color:#006100;">50.4</div>
<svg class="a" style="left:1285px;top:708px;" width="8" height="8" viewBox="0 0 8 8"><path d="M0 0h7L0 7z" fill="#008000"/></svg>
<svg class="a" style="left:1433px;top:708px;" width="8" height="8" viewBox="0 0 8 8"><path d="M0 0h7L0 7z" fill="#008000"/></svg>
<div class="a t" style="left:-311.0px;width:800px;text-align:center;top:743.76px;font-size:18px;color:#262626;"><span style="display:inline-block;transform:scaleX(1.1)">2021/7/8</span></div>
<div class="a t" style="left:-214.5px;width:800px;text-align:center;top:743.76px;font-size:18px;color:#262626;">28,332.63</div>
<div class="a t" style="left:-126.5px;width:800px;text-align:center;top:743.76px;font-size:18px;color:#262626;">28,366.76</div>
<div class="a t" style="left:-38.5px;width:800px;text-align:center;top:743.76px;font-size:18px;color:#262626;">28,118.03</div>
<div class="a t" style="left:52.5px;width:800px;text-align:center;top:743.76px;font-size:18px;color:#262626;">28,118.03</div>
<div class="a t" style="left:142.5px;width:800px;text-align:center;top:743.76px;font-size:18px;color:#262626;">-248.92</div>
<div class="a t" style="left:228.5px;width:800px;text-align:center;top:743.76px;font-size:18px;color:#262626;">-0.9</div>
<div class="a t" style="left:334.5px;width:800px;text-align:center;top:743.76px;font-size:18px;color:#262626;">923,350,600</div>
<div class="a t" style="left:436.0px;width:800px;text-align:center;top:743.76px;font-size:18px;color:#006100;">陰</div>
<div class="a t" style="left:505.5px;width:800px;text-align:center;top:743.76px;font-size:18px;color:#262626;">1</div>
<div class="a t" style="left:250px;width:800px;text-align:right;top:743.76px;font-size:18px;color:#262626;">-248.92</div>
<div class="a t" style="left:406px;width:800px;text-align:right;top:743.76px;font-size:18px;color:#262626;">28500</div>
<div class="a t" style="left:481px;width:800px;text-align:right;top:743.76px;font-size:18px;color:#006100;">0.9866</div>
<div class="a t" style="left:629px;width:800px;text-align:right;top:743.76px;font-size:18px;color:#006100;">0.9748</div>
<div class="a t" style="left:775px;width:800px;text-align:right;top:743.76px;font-size:18px;color:#006100;">0.9746</div>
<div class="a t" style="left:555px;width:800px;text-align:right;top:743.76px;font-size:18px;color:#262626;">28846</div>
<div class="a t" style="left:703px;width:800px;text-align:right;top:743.76px;font-size:18px;color:#262626;">28850</div>
<div class="a t" style="left:1582px;top:743.76px;font-size:18px;color:#262626;">下降</div>
<div class="a t" style="left:935px;width:800px;text-align:right;top:743.76px;font-size:18px;color:#006100;">48.7</div>
<svg class="a" style="left:1285px;top:738px;" width="8" height="8" viewBox="0 0 8 8"><path d="M0 0h7L0 7z" fill="#008000"/></svg>
<svg class="a" style="left:1433px;top:738px;" width="8" height="8" viewBox="0 0 8 8"><path d="M0 0h7L0 7z" fill="#008000"/></svg>
<div class="a t" style="left:-311.0px;width:800px;text-align:center;top:773.76px;font-size:18px;color:#262626;"><span style="display:inline-block;transform:scaleX(1.1)">2021/7/7</span></div>
<div class="a t" style="left:-214.5px;width:800px;text-align:center;top:773.76px;font-size:18px;color:#262626;">28,262.40</div>
<div class="a t" style="left:-126.5px;width:800px;text-align:center;top:773.76px;font-size:18px;color:#262626;">28,434.99</div>
<div class="a t" style="left:-38.5px;width:800px;text-align:center;top:773.76px;font-size:18px;color:#262626;">28,161.75</div>
<div class="a t" style="left:52.5px;width:800px;text-align:center;top:773.76px;font-size:18px;color:#262626;">28,358.83</div>
<div class="a t" style="left:142.5px;width:800px;text-align:center;top:773.76px;font-size:18px;color:#262626;">-284.38</div>
<div class="a t" style="left:228.5px;width:800px;text-align:center;top:773.76px;font-size:18px;color:#262626;">-1</div>
<div class="a t" style="left:334.5px;width:800px;text-align:center;top:773.76px;font-size:18px;color:#262626;">930,151,800</div>
<div class="a t" style="left:436.0px;width:800px;text-align:center;top:773.76px;font-size:18px;color:#9c0006;">陽</div>
<div class="a t" style="left:505.5px;width:800px;text-align:center;top:773.76px;font-size:18px;color:#262626;">1</div>
<div class="a t" style="left:250px;width:800px;text-align:right;top:773.76px;font-size:18px;color:#262626;">-284.38</div>
<div class="a t" style="left:406px;width:800px;text-align:right;top:773.76px;font-size:18px;color:#262626;">28618</div>
<div class="a t" style="left:481px;width:800px;text-align:right;top:773.76px;font-size:18px;color:#006100;">0.9909</div>
<div class="a t" style="left:629px;width:800px;text-align:right;top:773.76px;font-size:18px;color:#006100;">0.9818</div>
<div class="a t" style="left:775px;width:800px;text-align:right;top:773.76px;font-size:18px;color:#006100;">0.982</div>
<div class="a t" style="left:555px;width:800px;text-align:right;top:773.76px;font-size:18px;color:#262626;">28883</div>
<div class="a t" style="left:703px;width:800px;text-align:right;top:773.76px;font-size:18px;color:#262626;">28877</div>
<div class="a t" style="left:935px;width:800px;text-align:right;top:773.76px;font-size:18px;color:#006100;">47.6</div>
<svg class="a" style="left:1285px;top:768px;" width="8" height="8" viewBox="0 0 8 8"><path d="M0 0h7L0 7z" fill="#008000"/></svg>
<svg class="a" style="left:1433px;top:768px;" width="8" height="8" viewBox="0 0 8 8"><path d="M0 0h7L0 7z" fill="#008000"/></svg>
<div class="a t" style="left:-311.0px;width:800px;text-align:center;top:803.76px;font-size:18px;color:#262626;"><span style="display:inline-block;transform:scaleX(1.1)">2021/7/6</span></div>
<div class="a t" style="left:-214.5px;width:800px;text-align:center;top:803.76px;font-size:18px;color:#262626;">28,677.95</div>
<div class="a t" style="left:-126.5px;width:800px;text-align:center;top:803.76px;font-size:18px;color:#262626;">28,748.23</div>
<div class="a t" style="left:-38.5px;width:800px;text-align:center;top:803.76px;font-size:18px;color:#262626;">28,587.61</div>
<div class="a t" style="left:52.5px;width:800px;text-align:center;top:803.76px;font-size:18px;color:#262626;">28,643.21</div>
<div class="a t" style="left:142.5px;width:800px;text-align:center;top:803.76px;font-size:18px;color:#262626;">45.02</div>
<div class="a t" style="left:228.5px;width:800px;text-align:center;top:803.76px;font-size:18px;color:#262626;">0.2</div>
<div class="a t" style="left:334.5px;width:800px;text-align:center;top:803.76px;font-size:18px;color:#262626;">703,544,900</div>
<div class="a t" style="left:436.0px;width:800px;text-align:center;top:803.76px;font-size:18px;color:#006100;">陰</div>
<div class="a t" style="left:505.5px;width:800px;text-align:center;top:803.76px;font-size:18px;color:#262626;">2</div>
<div class="a t" style="left:250px;width:800px;text-align:right;top:803.76px;font-size:18px;color:#262626;">-140.07</div>
<div class="a t" style="left:406px;width:800px;text-align:right;top:803.76px;font-size:18px;color:#262626;">28705</div>
<div class="a t" style="left:481px;width:800px;text-align:right;top:803.76px;font-size:18px;color:#006100;">0.9979</div>
<div class="a t" style="left:629px;width:800px;text-align:right;top:803.76px;font-size:18px;color:#006100;">0.9909</div>
<div class="a t" style="left:775px;width:800px;text-align:right;top:803.76px;font-size:18px;color:#006100;">0.9911</div>
<div class="a t" style="left:555px;width:800px;text-align:right;top:803.76px;font-size:18px;color:#262626;">28907</div>
<div class="a t" style="left:703px;width:800px;text-align:right;top:803.76px;font-size:18px;color:#262626;">28900</div>
<div class="a t" style="left:935px;width:800px;text-align:right;top:803.76px;font-size:18px;color:#9c0006;">39.6</div>
<svg class="a" style="left:1285px;top:798px;" width="8" height="8" viewBox="0 0 8 8"><path d="M0 0h7L0 7z" fill="#008000"/></svg>
<svg class="a" style="left:1433px;top:798px;" width="8" height="8" viewBox="0 0 8 8"><path d="M0 0h7L0 7z" fill="#008000"/></svg>
<div class="a t" style="left:-311.0px;width:800px;text-align:center;top:833.76px;font-size:18px;color:#262626;"><span style="display:inline-block;transform:scaleX(1.1)">2021/7/5</span></div>
<div class="a t" style="left:-214.5px;width:800px;text-align:center;top:833.76px;font-size:18px;color:#262626;">28,709.57</div>
<div class="a t" style="left:-126.5px;width:800px;text-align:center;top:833.76px;font-size:18px;color:#262626;">28,731.07</div>
<div class="a t" style="left:-38.5px;width:800px;text-align:center;top:833.76px;font-size:18px;color:#262626;">28,581.08</div>
<div class="a t" style="left:52.5px;width:800px;text-align:center;top:833.76px;font-size:18px;color:#262626;">28,598.19</div>
<div class="a t" style="left:142.5px;width:800px;text-align:center;top:833.76px;font-size:18px;color:#262626;">-185.09</div>
<div class="a t" style="left:228.5px;width:800px;text-align:center;top:833.76px;font-size:18px;color:#262626;">-0.6</div>
<div class="a t" style="left:334.5px;width:800px;text-align:center;top:833.76px;font-size:18px;color:#262626;">689,780,200</div>
<div class="a t" style="left:436.0px;width:800px;text-align:center;top:833.76px;font-size:18px;color:#006100;">陰</div>
<div class="a t" style="left:505.5px;width:800px;text-align:center;top:833.76px;font-size:18px;color:#262626;">1</div>
<div class="a t" style="left:250px;width:800px;text-align:right;top:833.76px;font-size:18px;color:#262626;">-185.09</div>
<div class="a t" style="left:406px;width:800px;text-align:right;top:833.76px;font-size:18px;color:#262626;">28739</div>
<div class="a t" style="left:481px;width:800px;text-align:right;top:833.76px;font-size:18px;color:#006100;">0.9951</div>
<div class="a t" style="left:629px;width:800px;text-align:right;top:833.76px;font-size:18px;color:#006100;">0.9891</div>
<div class="a t" style="left:775px;width:800px;text-align:right;top:833.76px;font-size:18px;color:#006100;">0.9889</div>
<div class="a t" style="left:555px;width:800px;text-align:right;top:833.76px;font-size:18px;color:#262626;">28914</div>
<div class="a t" style="left:703px;width:800px;text-align:right;top:833.76px;font-size:18px;color:#262626;">28918</div>
<div class="a t" style="left:1582px;top:833.76px;font-size:18px;color:#262626;">下降</div>
<div class="a t" style="left:935px;width:800px;text-align:right;top:833.76px;font-size:18px;color:#006100;">45.1</div>
<svg class="a" style="left:1285px;top:828px;" width="8" height="8" viewBox="0 0 8 8"><path d="M0 0h7L0 7z" fill="#008000"/></svg>
<svg class="a" style="left:1433px;top:828px;" width="8" height="8" viewBox="0 0 8 8"><path d="M0 0h7L0 7z" fill="#008000"/></svg>
<div class="a t" style="left:-311.0px;width:800px;text-align:center;top:863.76px;font-size:18px;color:#262626;"><span style="display:inline-block;transform:scaleX(1.1)">2021/7/2</span></div>
<div class="a t" style="left:-214.5px;width:800px;text-align:center;top:863.76px;font-size:18px;color:#262626;">28,719.24</div>
<div class="a t" style="left:-126.5px;width:800px;text-align:center;top:863.76px;font-size:18px;color:#262626;">28,849.32</div>
<div class="a t" style="left:-38.5px;width:800px;text-align:center;top:863.76px;font-size:18px;color:#262626;">28,688.63</div>
<div class="a t" style="left:52.5px;width:800px;text-align:center;top:863.76px;font-size:18px;color:#262626;">28,783.28</div>
<div class="a t" style="left:142.5px;width:800px;text-align:center;top:863.76px;font-size:18px;color:#262626;">76.24</div>
<div class="a t" style="left:228.5px;width:800px;text-align:center;top:863.76px;font-size:18px;color:#262626;">0.3</div>
<div class="a t" style="left:334.5px;width:800px;text-align:center;top:863.76px;font-size:18px;color:#262626;">904,550,000</div>
<div class="a t" style="left:436.0px;width:800px;text-align:center;top:863.76px;font-size:18px;color:#9c0006;">陽</div>
<div class="a t" style="left:505.5px;width:800px;text-align:center;top:863.76px;font-size:18px;color:#262626;">1</div>
<div class="a t" style="left:250px;width:800px;text-align:right;top:863.76px;font-size:18px;color:#262626;">76.24</div>
<div class="a t" style="left:406px;width:800px;text-align:right;top:863.76px;font-size:18px;color:#262626;">28828</div>
<div class="a t" style="left:481px;width:800px;text-align:right;top:863.76px;font-size:18px;color:#006100;">0.9984</div>
<div class="a t" style="left:629px;width:800px;text-align:right;top:863.76px;font-size:18px;color:#006100;">0.9951</div>
<div class="a t" style="left:775px;width:800px;text-align:right;top:863.76px;font-size:18px;color:#006100;">0.9947</div>
<div class="a t" style="left:555px;width:800px;text-align:right;top:863.76px;font-size:18px;color:#262626;">28924</div>
<div class="a t" style="left:703px;width:800px;text-align:right;top:863.76px;font-size:18px;color:#262626;">28936</div>
<div class="a t" style="left:1582px;top:863.76px;font-size:18px;color:#262626;">下降</div>
<div class="a t" style="left:935px;width:800px;text-align:right;top:863.76px;font-size:18px;color:#006100;">41</div>
<svg class="a" style="left:1285px;top:858px;" width="8" height="8" viewBox="0 0 8 8"><path d="M0 0h7L0 7z" fill="#008000"/></svg>
<svg class="a" style="left:1433px;top:858px;" width="8" height="8" viewBox="0 0 8 8"><path d="M0 0h7L0 7z" fill="#008000"/></svg>
<div class="a t" style="left:-311.0px;width:800px;text-align:center;top:893.76px;font-size:18px;color:#262626;"><span style="display:inline-block;transform:scaleX(1.1)">2021/7/1</span></div>
<div class="a t" style="left:-214.5px;width:800px;text-align:center;top:893.76px;font-size:18px;color:#262626;">28,832.41</div>
<div class="a t" style="left:-126.5px;width:800px;text-align:center;top:893.76px;font-size:18px;color:#262626;">28,833.17</div>
<div class="a t" style="left:-38.5px;width:800px;text-align:center;top:893.76px;font-size:18px;color:#262626;">28,624.80</div>
<div class="a t" style="left:52.5px;width:800px;text-align:center;top:893.76px;font-size:18px;color:#262626;">28,707.04</div>
<div class="a t" style="left:142.5px;width:800px;text-align:center;top:893.76px;font-size:18px;color:#262626;">-84.49</div>
<div class="a t" style="left:228.5px;width:800px;text-align:center;top:893.76px;font-size:18px;color:#262626;">-0.3</div>
<div class="a t" style="left:334.5px;width:800px;text-align:center;top:893.76px;font-size:18px;color:#262626;">706,797,900</div>
<div class="a t" style="left:436.0px;width:800px;text-align:center;top:893.76px;font-size:18px;color:#006100;">陰</div>
<div class="a t" style="left:505.5px;width:800px;text-align:center;top:893.76px;font-size:18px;color:#262626;">5</div>
<div class="a t" style="left:250px;width:800px;text-align:right;top:893.76px;font-size:18px;color:#262626;">-168.19</div>
<div class="a t" style="left:406px;width:800px;text-align:right;top:893.76px;font-size:18px;color:#262626;">28885</div>
<div class="a t" style="left:481px;width:800px;text-align:right;top:893.76px;font-size:18px;color:#006100;">0.9938</div>
<div class="a t" style="left:629px;width:800px;text-align:right;top:893.76px;font-size:18px;color:#006100;">0.992</div>
<div class="a t" style="left:775px;width:800px;text-align:right;top:893.76px;font-size:18px;color:#006100;">0.9913</div>
<div class="a t" style="left:555px;width:800px;text-align:right;top:893.76px;font-size:18px;color:#262626;">28939</div>
<div class="a t" style="left:703px;width:800px;text-align:right;top:893.76px;font-size:18px;color:#262626;">28958</div>
<div class="a t" style="left:1582px;top:893.76px;font-size:18px;color:#262626;">下降</div>
<div class="a t" style="left:935px;width:800px;text-align:right;top:893.76px;font-size:18px;color:#006100;">42.1</div>
<svg class="a" style="left:1285px;top:888px;" width="8" height="8" viewBox="0 0 8 8"><path d="M0 0h7L0 7z" fill="#008000"/></svg>
<svg class="a" style="left:1433px;top:888px;" width="8" height="8" viewBox="0 0 8 8"><path d="M0 0h7L0 7z" fill="#008000"/></svg>
<div class="a t" style="left:-311.0px;width:800px;text-align:center;top:923.76px;font-size:18px;color:#262626;"><span style="display:inline-block;transform:scaleX(1.1)">2021/6/30</span></div>
<div class="a t" style="left:-214.5px;width:800px;text-align:center;top:923.76px;font-size:18px;color:#262626;">28,896.31</div>
<div class="a t" style="left:-126.5px;width:800px;text-align:center;top:923.76px;font-size:18px;color:#262626;">28,998.99</div>
<div class="a t" style="left:-38.5px;width:800px;text-align:center;top:923.76px;font-size:18px;color:#262626;">28,779.76</div>
<div class="a t" style="left:52.5px;width:800px;text-align:center;top:923.76px;font-size:18px;color:#262626;">28,791.53</div>
<div class="a t" style="left:142.5px;width:800px;text-align:center;top:923.76px;font-size:18px;color:#262626;">-21.08</div>
<div class="a t" style="left:228.5px;width:800px;text-align:center;top:923.76px;font-size:18px;color:#262626;">-0.1</div>
<div class="a t" style="left:334.5px;width:800px;text-align:center;top:923.76px;font-size:18px;color:#262626;">772,484,500</div>
<div class="a t" style="left:436.0px;width:800px;text-align:center;top:923.76px;font-size:18px;color:#006100;">陰</div>
<div class="a t" style="left:505.5px;width:800px;text-align:center;top:923.76px;font-size:18px;color:#262626;">4</div>
<div class="a t" style="left:250px;width:800px;text-align:right;top:923.76px;font-size:18px;color:#262626;">-83.7</div>
<div class="a t" style="left:406px;width:800px;text-align:right;top:923.76px;font-size:18px;color:#262626;">28919</div>
<div class="a t" style="left:481px;width:800px;text-align:right;top:923.76px;font-size:18px;color:#006100;">0.9956</div>
<div class="a t" style="left:629px;width:800px;text-align:right;top:923.76px;font-size:18px;color:#006100;">0.9951</div>
<div class="a t" style="left:775px;width:800px;text-align:right;top:923.76px;font-size:18px;color:#006100;">0.9936</div>
<div class="a t" style="left:555px;width:800px;text-align:right;top:923.76px;font-size:18px;color:#262626;">28932</div>
<div class="a t" style="left:703px;width:800px;text-align:right;top:923.76px;font-size:18px;color:#262626;">28977</div>
<div class="a t" style="left:1582px;top:923.76px;font-size:18px;color:#262626;">下降</div>
<div class="a t" style="left:935px;width:800px;text-align:right;top:923.76px;font-size:18px;color:#006100;">40.5</div>
<svg class="a" style="left:1285px;top:918px;" width="8" height="8" viewBox="0 0 8 8"><path d="M0 0h7L0 7z" fill="#008000"/></svg>
<svg class="a" style="left:1433px;top:918px;" width="8" height="8" viewBox="0 0 8 8"><path d="M0 0h7L0 7z" fill="#008000"/></svg>
<div class="a t" style="left:-311.0px;width:800px;text-align:center;top:953.76px;font-size:18px;color:#262626;"><span style="display:inline-block;transform:scaleX(1.1)">2021/6/29</span></div>
<div class="a t" style="left:-214.5px;width:800px;text-align:center;top:953.76px;font-size:18px;color:#262626;">28,927.44</div>
<div class="a t" style="left:-126.5px;width:800px;text-align:center;top:953.76px;font-size:18px;color:#262626;">28,951.68</div>
<div class="a t" style="left:-38.5px;width:800px;text-align:center;top:953.76px;font-size:18px;color:#262626;">28,735.55</div>
<div class="a t" style="left:52.5px;width:800px;text-align:center;top:953.76px;font-size:18px;color:#262626;">28,812.61</div>
<div class="a t" style="left:142.5px;width:800px;text-align:center;top:953.76px;font-size:18px;color:#262626;">-235.41</div>
<div class="a t" style="left:228.5px;width:800px;text-align:center;top:953.76px;font-size:18px;color:#262626;">-0.8</div>
<div class="a t" style="left:334.5px;width:800px;text-align:center;top:953.76px;font-size:18px;color:#262626;">858,246,500</div>
<div class="a t" style="left:436.0px;width:800px;text-align:center;top:953.76px;font-size:18px;color:#006100;">陰</div>
<div class="a t" style="left:505.5px;width:800px;text-align:center;top:953.76px;font-size:18px;color:#262626;">3</div>
<div class="a t" style="left:250px;width:800px;text-align:right;top:953.76px;font-size:18px;color:#262626;">-62.62</div>
<div class="a t" style="left:406px;width:800px;text-align:right;top:953.76px;font-size:18px;color:#262626;">28935</div>
<div class="a t" style="left:481px;width:800px;text-align:right;top:953.76px;font-size:18px;color:#006100;">0.9958</div>
<div class="a t" style="left:629px;width:800px;text-align:right;top:953.76px;font-size:18px;color:#006100;">0.9961</div>
<div class="a t" style="left:775px;width:800px;text-align:right;top:953.76px;font-size:18px;color:#006100;">0.994</div>
<div class="a t" style="left:555px;width:800px;text-align:right;top:953.76px;font-size:18px;color:#262626;">28926</div>
<div class="a t" style="left:703px;width:800px;text-align:right;top:953.76px;font-size:18px;color:#262626;">28987</div>
<div class="a t" style="left:935px;width:800px;text-align:right;top:953.76px;font-size:18px;color:#006100;">44.3</div>
<svg class="a" style="left:1285px;top:948px;" width="8" height="8" viewBox="0 0 8 8"><path d="M0 0h7L0 7z" fill="#008000"/></svg>
<svg class="a" style="left:1433px;top:948px;" width="8" height="8" viewBox="0 0 8 8"><path d="M0 0h7L0 7z" fill="#008000"/></svg>
<div class="a" style="left:1643px;top:346px;width:93px;height:29px;border:2px solid #217346;box-shadow:inset 0 0 0 1px #fff"></div>
<div class="a" style="left:1736px;top:374px;width:6px;height:6px;background:#217346;border:1px solid #fff;box-sizing:border-box;width:7px;height:7px"></div>
<div class="a" style="left:1895px;top:258px;width:25px;height:717px;background:#e6e6e6;"></div>
<div class="a" style="left:1898px;top:320px;width:19px;height:653px;background:#dadada;"></div>
<div class="a" style="left:1898px;top:260px;width:17px;height:17px;background:#fff;border:1px solid #c6c6c6"></div>
<svg class="a" style="left:1902px;top:265px;" width="11" height="7" viewBox="0 0 11 7"><path d="M0 6h10L5 0z" fill="#777"/></svg>
<div class="a" style="left:1898px;top:279px;width:17px;height:39px;background:#fff;border:1px solid #c6c6c6"></div>
<div class="a" style="left:1898px;top:955px;width:17px;height:17px;background:#fff;border:1px solid #c6c6c6"></div>
<svg class="a" style="left:1902px;top:961px;" width="11" height="7" viewBox="0 0 11 7"><path d="M0 0h10L5 6z" fill="#777"/></svg>
<div class="a" style="left:0px;top:975px;width:1920px;height:28px;background:#e6e6e6;"></div>
<div class="a" style="left:0px;top:975px;width:1894px;height:1px;background:#ababab;"></div>
<svg class="a" style="left:27px;top:985px;" width="8" height="10" viewBox="0 0 8 10"><path d="M6.5 0.5v9L1 5z" fill="#217346"/></svg>
<svg class="a" style="left:55px;top:985px;" width="8" height="10" viewBox="0 0 8 10"><path d="M1 0.5v9L6.5 5z" fill="#217346"/></svg>
<div class="a" style="left:80px;top:990px;width:2px;height:2px;background:#333;"></div>
<div class="a" style="left:85px;top:990px;width:2px;height:2px;background:#333;"></div>
<div class="a" style="left:90px;top:990px;width:2px;height:2px;background:#333;"></div>
<div class="a" style="left:100px;top:979px;width:1px;height:19px;background:#b4b4b4;"></div>
<div class="a t" style="left:107.98px;top:978.00px;font-size:18px;color:#444;transform:scale(0.8603,0.8333);">トレンド統計関連</div>
<div class="a" style="left:244px;top:975px;width:94px;height:25px;background:#fff;border-left:1px solid #b4b4b4;border-right:1px solid #b4b4b4;box-sizing:border-box"></div>
<div class="a" style="left:247px;top:978px;width:88px;height:19px;background:linear-gradient(#fff 0%,#fff 35%,#f7a3a3 100%)"></div>
<div class="a" style="left:244px;top:998px;width:95px;height:2px;background:#217346;"></div>
<div class="a t" style="left:254.85px;top:978.12px;font-size:18px;color:#217346;transform:scale(1.0484,0.8750);">日経225</div>
<div class="a" style="left:341px;top:978px;width:112px;height:22px;background:#ff0000;"></div>
<div class="a" style="left:338px;top:980px;width:1px;height:18px;background:#a0a0a0;"></div>
<div class="a t" style="left:352.17px;top:979.00px;font-size:18px;color:#fff;transform:scale(0.8302,0.7778);">マサーズ指標</div>
<div class="a" style="left:458px;top:978px;width:55px;height:22px;background:#ff0000;"></div>
<div class="a" style="left:455px;top:980px;width:1px;height:18px;background:#a0a0a0;"></div>
<div class="a t" style="left:468.00px;top:977.00px;font-size:18px;color:#fff;transform:scale(0.9706,1.0000);">JAQ</div>
<div class="a" style="left:518px;top:978px;width:77px;height:22px;background:#ff0000;"></div>
<div class="a" style="left:515px;top:980px;width:1px;height:18px;background:#a0a0a0;"></div>
<div class="a t" style="left:532.00px;top:976.85px;font-size:18px;color:#fff;transform:scale(0.9434,1.0769);">TOPIX</div>
<div class="a" style="left:600px;top:978px;width:160px;height:22px;background:#ffc000;"></div>
<div class="a" style="left:597px;top:980px;width:1px;height:18px;background:#a0a0a0;"></div>
<div class="a t" style="left:610.00px;top:979.00px;font-size:18px;color:#000;transform:scale(0.9724,0.7778);">個別&nbsp; 騰落率&nbsp; 推移</div>
<div class="a" style="left:765px;top:978px;width:87px;height:22px;background:#ffc000;"></div>
<div class="a" style="left:762px;top:980px;width:1px;height:18px;background:#a0a0a0;"></div>
<div class="a t" style="left:773.03px;top:979.00px;font-size:18px;color:#000;transform:scale(0.9714,0.8235);">東証一部</div>
<div class="a" style="left:857px;top:978px;width:87px;height:22px;background:#ffc000;"></div>
<div class="a" style="left:854px;top:980px;width:1px;height:18px;background:#a0a0a0;"></div>
<div class="a t" style="left:865.03px;top:979.00px;font-size:18px;color:#000;transform:scale(0.9714,0.8235);">東証二部</div>
<div class="a" style="left:949px;top:978px;width:42px;height:22px;background:#ffc000;"></div>
<div class="a" style="left:946px;top:980px;width:1px;height:18px;background:#a0a0a0;"></div>
<div class="a t" style="left:959.00px;top:977.00px;font-size:18px;color:#000;transform:scale(0.9545,1.0000);">JQ</div>
<div class="a" style="left:996px;top:978px;width:78px;height:22px;background:#ffc000;"></div>
<div class="a" style="left:993px;top:980px;width:1px;height:18px;background:#a0a0a0;"></div>
<div class="a t" style="left:1007.24px;top:978.18px;font-size:18px;color:#000;transform:scale(0.7606,0.8235);">マサーズ</div>
<div class="a" style="left:1076px;top:980px;width:1px;height:18px;background:#b4b4b4;"></div>
<div class="a" style="left:1088px;top:990px;width:2px;height:2px;background:#217346;"></div>
<div class="a" style="left:1093px;top:990px;width:2px;height:2px;background:#217346;"></div>
<div class="a" style="left:1098px;top:990px;width:2px;height:2px;background:#217346;"></div>
<svg class="a" style="left:1111px;top:979px;" width="22" height="22" viewBox="0 0 22 22"><circle cx="11" cy="11" r="9.5" fill="none" stroke="#666" stroke-width="1.3"/><path d="M11 5.5v11M5.5 11h11" stroke="#666" stroke-width="1.6"/></svg>
<div class="a" style="left:1148px;top:983px;width:2px;height:3px;background:#a0a0a0;"></div>
<div class="a" style="left:1148px;top:989px;width:2px;height:3px;background:#a0a0a0;"></div>
<div class="a" style="left:1148px;top:995px;width:2px;height:3px;background:#a0a0a0;"></div>
<div class="a" style="left:1166px;top:980px;width:710px;height:19px;background:#dcdcdc;"></div>
<div class="a" style="left:1166px;top:980px;width:17px;height:17px;background:#fff;border:1px solid #c6c6c6"></div>
<svg class="a" style="left:1171px;top:985px;" width="7" height="10" viewBox="0 0 7 10"><path d="M6 0v9L0 4.5z" fill="#777"/></svg>
<div class="a" style="left:1184px;top:980px;width:657px;height:17px;background:#fff;border:1px solid #c6c6c6"></div>
<div class="a" style="left:1876px;top:980px;width:17px;height:17px;background:#fff;border:1px solid #c6c6c6"></div>
<svg class="a" style="left:1882px;top:985px;" width="7" height="10" viewBox="0 0 7 10"><path d="M0 0v9l6-4.5z" fill="#777"/></svg>
<div class="a" style="left:0px;top:1003px;width:1920px;height:1px;background:#d0d0d0;"></div>
<div class="a" style="left:0px;top:1004px;width:1920px;height:26px;background:#f3f3f3;"></div>
<div class="a t" style="left:7.95px;top:1010.07px;font-size:15px;color:#333;transform:scale(1.0526,0.9286);">準備完了</div>
<div class="a" style="left:1538px;top:1004px;width:50px;height:26px;background:#c6c6c6;"></div>
<svg class="a" style="left:1555px;top:1009px;" width="16" height="16" viewBox="0 0 16 16"><path d="M0.5 0.5h15v15H0.5zM5.5 0.5v15M10.5 0.5v15M0.5 5.5h15M0.5 10.5h15" fill="none" stroke="#555" stroke-width="1"/></svg>
<svg class="a" style="left:1604px;top:1009px;" width="18" height="16" viewBox="0 0 18 16"><rect x="0.5" y="0.5" width="16" height="15" fill="none" stroke="#666"/><rect x="3.5" y="3.5" width="10" height="9" fill="none" stroke="#666"/><path d="M5 6h7M5 8h7M5 10h7" stroke="#666"/></svg>
<svg class="a" style="left:1654px;top:1009px;" width="18" height="16" viewBox="0 0 18 16"><path d="M0.5 0.5h16v15H0.5zM0.5 8.5h8V0.5M5 0.5v8" fill="none" stroke="#666"/></svg>
<div class="a" style="left:1695px;top:1016px;width:10px;height:1px;background:#555;"></div>
<div class="a" style="left:1711px;top:1016px;width:125px;height:1px;background:#a6a6a6;"></div>
<div class="a" style="left:1771px;top:1010px;width:6px;height:14px;background:#666;"></div>
<div class="a" style="left:1842px;top:1016px;width:10px;height:1px;background:#555;"></div>
<div class="a" style="left:1846px;top:1012px;width:1px;height:10px;background:#555;"></div>
<div class="a t" style="left:1867.97px;top:1011.00px;font-size:16px;color:#333;transform:scale(1.0250,1.0000);">100%</div>
<div class="a" style="left:0px;top:1030px;width:1920px;height:50px;background:#efe5cf;"></div>
<svg class="a" style="left:20px;top:1045px;" width="20" height="20" viewBox="0 0 20 20"><path d="M0 2.8L8.2 1.7v7.9H0zM9.2 1.5L20 0v9.6H9.2zM0 10.5h8.2v7.9L0 17.2zM9.2 10.5H20V20L9.2 18.5z" fill="#111"/></svg>
<div class="a" style="left:60px;top:1030px;width:429px;height:50px;background:#fff;border:1px solid #d4d4d4;box-sizing:border-box"></div>
<svg class="a" style="left:74px;top:1045px;" width="22" height="21" viewBox="0 0 22 21"><circle cx="13" cy="8" r="6.5" fill="none" stroke="#222" stroke-width="1.6"/><path d="M8.5 12.5L1.5 19.5" stroke="#222" stroke-width="1.8"/></svg>
<div class="a t" style="left:107.32px;top:1047.00px;font-size:18px;color:#444;transform:scale(0.8924,0.9444);">ここに入力して検索</div>
<svg class="a" style="left:509px;top:1044px;" width="22" height="22" viewBox="0 0 22 22"><circle cx="11" cy="11" r="8.4" fill="none" stroke="#111" stroke-width="2.4"/></svg>
<svg class="a" style="left:569px;top:1044px;" width="22" height="22" viewBox="0 0 22 22"><path d="M1.5 1v3.5h11V1M1.5 21v-3.5h11V21" fill="none" stroke="#111" stroke-width="1.3"/><rect x="1.5" y="6.5" width="11" height="8.5" fill="none" stroke="#111" stroke-width="1.3"/><path d="M19.5 1v20" stroke="#111" stroke-width="1.2"/><rect x="18" y="7" width="3" height="3" fill="#111"/></svg>
<svg class="a" style="left:629px;top:1042px;" width="30" height="25" viewBox="0 0 30 25"><path d="M1 3h9l3 3h16v17H1z" fill="#e8a93a"/><path d="M1 8h28v15H1z" fill="#ffd24d"/><path d="M9 14h12v9h-3v-5h-6v5H9z" fill="#1e7ad6"/></svg>
<div class="a" style="left:619px;top:1077px;width:51px;height:3px;background:#1a73d9;"></div>
<svg class="a" style="left:690px;top:1039px;" width="31" height="32" viewBox="0 0 31 32"><path d="M8.5 9V3.5a2 2 0 0 1 2-2h10a2 2 0 0 1 2 2V9" fill="none" stroke="#222" stroke-width="2.2"/><rect x="1" y="9" width="29" height="22" rx="1.5" fill="#262626"/><rect x="10" y="15" width="5" height="5" fill="#f25022"/><rect x="16" y="15" width="5" height="5" fill="#7fba00"/><rect x="10" y="21" width="5" height="5" fill="#00a4ef"/><rect x="16" y="21" width="5" height="5" fill="#ffb900"/></svg>
<svg class="a" style="left:752px;top:1040px;" width="32" height="30" viewBox="0 0 32 30"><path d="M1 11L16 1l15 10v17H1z" fill="#0f5fb8"/><path d="M4 9h24v10L16 25 4 19z" fill="#fff"/><path d="M1 11l15 10 15-10v18H1z" fill="#27a3f0"/><path d="M1 29l15-10 15 10z" fill="#1380d6"/></svg>
<svg class="a" style="left:815px;top:1040px;" width="31" height="31" viewBox="0 0 31 31"><rect width="30" height="30" fill="#f4532a"/><circle cx="15" cy="15" r="12" fill="#fff"/><circle cx="15" cy="13" r="5" fill="none" stroke="#f4532a" stroke-width="1.5"/><path d="M8 24c1.5-4 12.5-4 14 0" fill="none" stroke="#f4532a" stroke-width="1.5"/><path d="M9 12c1-5 11-6 12 0" fill="none" stroke="#f4532a" stroke-width="2"/></svg>
<svg class="a" style="left:878px;top:1041px;" width="28" height="28" viewBox="0 0 28 28"><rect width="28" height="27" rx="3" fill="#1f3fcf"/><rect x="1" y="1" width="26" height="13" rx="2.5" fill="#3a62f0"/><text x="14" y="17" font-size="17" fill="#fff" text-anchor="middle">@</text><text x="14" y="25" font-size="7" fill="#fff" text-anchor="middle">menu</text></svg>
<svg class="a" style="left:938px;top:1039px;" width="32" height="32" viewBox="0 0 32 32"><defs><linearGradient id="e1" x1="0" y1="1" x2="1" y2="0"><stop offset="0" stop-color="#0b4f9c"/><stop offset="1" stop-color="#1a8fdc"/></linearGradient><linearGradient id="e2" x1="0" y1="0" x2="1" y2="1"><stop offset="0" stop-color="#2bb0ef"/><stop offset="1" stop-color="#6ee06a"/></linearGradient></defs><circle cx="16" cy="16" r="15" fill="url(#e1)"/><path d="M1.5 14C3 6 9 1 16 1c9 0 15 6 15 14 0 4-3 7-8 7h-9c0-4 3-7 7-7-5-4-14-4-19.5-1z" fill="url(#e2)"/><ellipse cx="17.5" cy="17.5" rx="4.5" ry="3.5" fill="#efe5cf"/><path d="M7 20c1 6 7 10 13 9" fill="none" stroke="#0b4f9c" stroke-width="2" opacity="0.5"/></svg>
<div class="a" style="left:929px;top:1077px;width:51px;height:3px;background:#1a73d9;"></div>
<div class="a" style="left:986px;top:1030px;width:61px;height:50px;background:#f7f1e4;"></div>
<svg class="a" style="left:1000px;top:1040px;" width="32" height="30" viewBox="0 0 32 30"><rect x="8" y="1" width="22" height="28" rx="1.5" fill="#185c37"/><rect x="8" y="1" width="22" height="7" fill="#33c481"/><rect x="8" y="8" width="22" height="7" fill="#21a366"/><rect x="8" y="15" width="22" height="7" fill="#107c41"/><rect x="19" y="1" width="11" height="7" fill="#3ed08e"/><rect x="19" y="8" width="11" height="7" fill="#2bb673"/><rect x="19" y="15" width="11" height="7" fill="#1a9456"/><rect x="0.5" y="6" width="16" height="16" rx="1.5" fill="#107c41"/><path d="M4.5 9.5l7 9M11.5 9.5l-7 9" stroke="#fff" stroke-width="2.2"/></svg>
<div class="a" style="left:986px;top:1077px;width:61px;height:3px;background:#1a73d9;"></div>
<svg class="a" style="left:1063px;top:1040px;" width="30" height="30" viewBox="0 0 30 30"><defs><linearGradient id="ph" x1="0" y1="0" x2="0" y2="1"><stop offset="0" stop-color="#2aa8f2"/><stop offset="1" stop-color="#4a7fd8"/></linearGradient></defs><rect x="0.5" y="0.5" width="29" height="28" rx="1.5" fill="url(#ph)"/><path d="M0.5 28.5V19l11-11 18 18v2.5z" fill="#1b3c86"/><path d="M14 19l5-5 10.5 10.5v4h-8z" fill="#3466c4"/><circle cx="19.5" cy="6.5" r="2.6" fill="#fff"/></svg>
<div class="a" style="left:1053px;top:1077px;width:50px;height:3px;background:#1a73d9;"></div>
<svg class="a" style="left:1385px;top:1043px;" width="28" height="25" viewBox="0 0 28 25"><circle cx="11" cy="12" r="10.5" fill="#f7b733"/><circle cx="11" cy="12" r="10.5" fill="#fcc94a" opacity="0.6"/><path d="M9 21a5 5 0 0 1 1-9 6 6 0 0 1 11-1 4.5 4.5 0 0 1 1 9z" fill="#dbeaf7" stroke="#9fc6e8" stroke-width="1"/></svg>
<div class="a t" style="left:1422.97px;top:1047.67px;font-size:17px;color:#222;transform:scale(1.0278,1.1667);">32°C</div>
<div class="a t" style="left:1471.14px;top:1048.00px;font-size:17px;color:#222;transform:scale(0.8596,1.0000);">晴れのちくもり</div>
<svg class="a" style="left:1590px;top:1049px;" width="18" height="11" viewBox="0 0 18 11"><path d="M1 10l8-8 8 8" fill="none" stroke="#222" stroke-width="1.4"/></svg>
<svg class="a" style="left:1618px;top:1046px;" width="22" height="15" viewBox="0 0 22 15"><path d="M5 14a4.5 4.5 0 0 1-.5-9 6.5 6.5 0 0 1 12.5 1 4 4 0 0 1 0 8z" fill="#888" stroke="#333" stroke-width="1.2"/></svg>
<svg class="a" style="left:1648px;top:1046px;" width="23" height="14" viewBox="0 0 23 14"><path d="M1 3h3M2.5 1v4M4 3h2" stroke="#111" stroke-width="1.3"/><rect x="5.5" y="2.5" width="15" height="10" fill="none" stroke="#111" stroke-width="1.5"/><rect x="7.5" y="4.5" width="11" height="6" fill="#111"/><rect x="20.5" y="5.5" width="2" height="4" fill="#111"/></svg>
<svg class="a" style="left:1681px;top:1044px;" width="19" height="18" viewBox="0 0 19 18"><path d="M2 17a15 15 0 0 1 15-15M5.5 17a11.5 11.5 0 0 1 11.5-11.5M9 17a8 8 0 0 1 8-8M12.5 17a4.5 4.5 0 0 1 4.5-4.5" fill="none" stroke="#222" stroke-width="1.3"/><circle cx="16" cy="16" r="1.8" fill="#222"/></svg>
<svg class="a" style="left:1707px;top:1043px;" width="24" height="20" viewBox="0 0 24 20"><path d="M2 7h4l5-4v14l-5-4H2z" fill="none" stroke="#222" stroke-width="1.3"/><path d="M14 6.5a5 5 0 0 1 0 7M17 4a8.5 8.5 0 0 1 0 12M20 2a12 12 0 0 1 0 16" fill="none" stroke="#222" stroke-width="1.2"/></svg>
<div class="a t" style="left:1741.00px;top:1043.14px;font-size:20px;color:#111;transform:scale(1.1538,1.2857);">A</div>
<div class="a t" style="left:1790.03px;top:1035.70px;font-size:15px;color:#222;transform:scale(0.9722,1.1000);">17:02</div>
<div class="a t" style="left:1769.99px;top:1058.82px;font-size:15px;color:#222;transform:scale(1.0135,1.0909);">2021/08/01</div>
<svg class="a" style="left:1867px;top:1043px;" width="33" height="33" viewBox="0 0 33 33"><path d="M2 2h21v16H9l-4 4v-4H2z" fill="#111"/><path d="M6 7h13M6 10.5h13M6 14h9" stroke="#fff" stroke-width="1.3"/><circle cx="21" cy="21" r="10" fill="#e6e0d2" stroke="#999" stroke-width="1.2"/><text x="21" y="26" font-size="13" font-weight="bold" fill="#111" text-anchor="middle">1</text></svg>
<div class="a" style="left:1914px;top:1030px;width:1px;height:50px;background:#d8ccb4;"></div>
</body></html>
